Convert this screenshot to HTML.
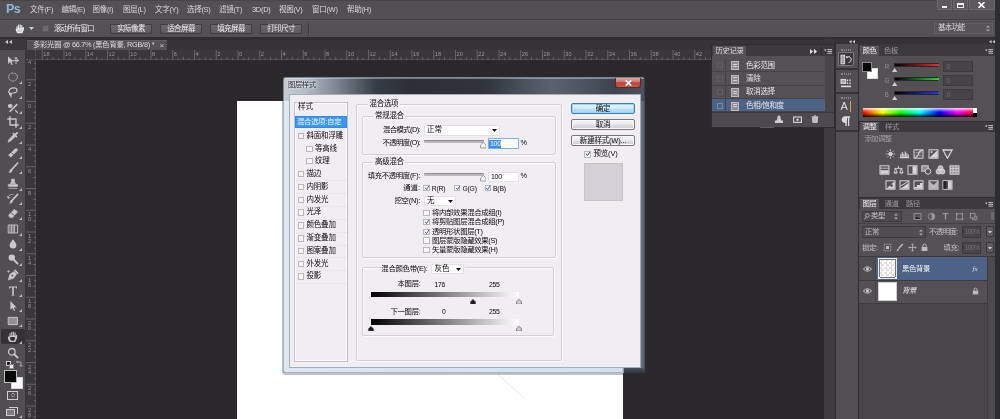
<!DOCTYPE html>
<html lang="zh-CN"><head><meta charset="utf-8"><title>图层样式</title>
<style>
html,body{margin:0;padding:0;}
body{width:1000px;height:419px;overflow:hidden;position:relative;background:#2a282b;
font-family:"Liberation Sans","Noto Sans CJK SC",sans-serif;}
div,span,svg{position:absolute;box-sizing:border-box;}
span{position:static;}
#root{left:0;top:0;width:1000px;height:419px;will-change:transform;}
</style></head><body><div id="root">
<div style="left:237px;top:101px;width:386px;height:318px;background:#ffffff;"></div>
<svg style="left:495px;top:372px" width="32" height="28"><path d="M3 2.5 L28.5 25.5" stroke="#e9e7ea" stroke-width="1" fill="none"/></svg>
<div style="left:0px;top:0px;width:1000px;height:20px;background:#525053;"></div>
<div style="left:0px;top:0px;width:1000px;height:1px;background:#474548;"></div>
<div style="left:0px;top:18.6px;width:1000px;height:1px;background:#403e41;"></div>
<div style="top:1.85px;font-size:12.5px;line-height:15.5px;color:#8db7dd;white-space:nowrap;left:6px;font-weight:bold;letter-spacing:-0.5px;">Ps</div>
<div style="top:4.85px;font-size:7.5px;line-height:10.5px;color:#dad8db;white-space:nowrap;left:30px;letter-spacing:-0.3px;">文件(F)</div>
<div style="top:4.85px;font-size:7.5px;line-height:10.5px;color:#dad8db;white-space:nowrap;left:61.5px;letter-spacing:-0.3px;">编辑(E)</div>
<div style="top:4.85px;font-size:7.5px;line-height:10.5px;color:#dad8db;white-space:nowrap;left:92.5px;letter-spacing:-0.3px;">图像(I)</div>
<div style="top:4.85px;font-size:7.5px;line-height:10.5px;color:#dad8db;white-space:nowrap;left:123px;letter-spacing:-0.3px;">图层(L)</div>
<div style="top:4.85px;font-size:7.5px;line-height:10.5px;color:#dad8db;white-space:nowrap;left:155px;letter-spacing:-0.3px;">文字(Y)</div>
<div style="top:4.85px;font-size:7.5px;line-height:10.5px;color:#dad8db;white-space:nowrap;left:187px;letter-spacing:-0.3px;">选择(S)</div>
<div style="top:4.85px;font-size:7.5px;line-height:10.5px;color:#dad8db;white-space:nowrap;left:219px;letter-spacing:-0.3px;">滤镜(T)</div>
<div style="top:4.85px;font-size:7.5px;line-height:10.5px;color:#dad8db;white-space:nowrap;left:252px;letter-spacing:-0.3px;">3D(D)</div>
<div style="top:4.85px;font-size:7.5px;line-height:10.5px;color:#dad8db;white-space:nowrap;left:279px;letter-spacing:-0.3px;">视图(V)</div>
<div style="top:4.85px;font-size:7.5px;line-height:10.5px;color:#dad8db;white-space:nowrap;left:312px;letter-spacing:-0.3px;">窗口(W)</div>
<div style="top:4.85px;font-size:7.5px;line-height:10.5px;color:#dad8db;white-space:nowrap;left:347px;letter-spacing:-0.3px;">帮助(H)</div>
<div style="left:937px;top:0px;width:15px;height:10px;background:#5b595c;border:1px solid #6a686b;border-top:none;"></div>
<div style="left:953px;top:0px;width:15px;height:10px;background:#5b595c;border:1px solid #6a686b;border-top:none;"></div>
<div style="left:969px;top:0px;width:26px;height:10px;background:#5b595c;border:1px solid #6a686b;border-top:none;"></div>
<div style="left:942px;top:6px;width:5px;height:2px;background:#f0f0f0;"></div>
<div style="left:957px;top:3px;width:7px;height:5px;border:1.5px solid #f0f0f0;border-top-width:2px;"></div>
<svg style="left:978px;top:2px" width="7" height="6" viewBox="0 0 7 6"><path d="M0.5 0 L6.5 6 M6.5 0 L0.5 6" stroke="#f4f4f4" stroke-width="1.6" fill="none"/></svg>
<div style="left:0px;top:19.6px;width:1000px;height:17.4px;background:#535154;"></div>
<div style="left:0px;top:19.6px;width:1000px;height:1px;background:#5b595c;"></div>
<div style="left:0px;top:37px;width:1000px;height:3px;background:#302e31;"></div>
<svg style="left:15px;top:24px" width="10" height="10" viewBox="0 0 10 10"><path d="M2 5 V2.2 M3.6 4.5 V1 M5.2 4.5 V0.8 M6.8 4.8 V1.6 M1.2 5.2 L2.4 8.6 H7 L8.4 5.6 V3.6 M2 4.6 Q1 6 2.6 8.6 H7 L8.2 6 V4.6 Z" stroke="#e8e8e8" stroke-width="1.1" fill="#e8e8e8" fill-opacity="0.85" stroke-linecap="round"/></svg>
<svg style="left:29px;top:27px" width="5" height="3"><path d="M0 0 H5 L2.5 3 Z" fill="#cfcfcf"/></svg>
<div style="left:42px;top:25px;width:7px;height:7px;background:#6c6a6d;border:1px solid #5a585b;"></div>
<div style="top:23.95px;font-size:7.5px;line-height:10.5px;color:#e6e4e7;white-space:nowrap;left:54px;letter-spacing:-0.9px;">滚动所有窗口</div>
<div style="left:110px;top:24px;width:42px;height:10px;background:linear-gradient(#6b696c,#5c5a5d);border:1px solid #3f3d40;border-radius:1px;"></div>
<div style="top:23.55px;font-size:7.5px;line-height:10.5px;color:#eeecef;white-space:nowrap;left:31.0px;width:200px;text-align:center;letter-spacing:-0.6px;">实际像素</div>
<div style="left:160px;top:24px;width:42px;height:10px;background:linear-gradient(#6b696c,#5c5a5d);border:1px solid #3f3d40;border-radius:1px;"></div>
<div style="top:23.55px;font-size:7.5px;line-height:10.5px;color:#eeecef;white-space:nowrap;left:81.0px;width:200px;text-align:center;letter-spacing:-0.6px;">适合屏幕</div>
<div style="left:210px;top:24px;width:42px;height:10px;background:linear-gradient(#6b696c,#5c5a5d);border:1px solid #3f3d40;border-radius:1px;"></div>
<div style="top:23.55px;font-size:7.5px;line-height:10.5px;color:#eeecef;white-space:nowrap;left:131.0px;width:200px;text-align:center;letter-spacing:-0.6px;">填充屏幕</div>
<div style="left:260px;top:24px;width:42px;height:10px;background:linear-gradient(#6b696c,#5c5a5d);border:1px solid #3f3d40;border-radius:1px;"></div>
<div style="top:23.55px;font-size:7.5px;line-height:10.5px;color:#eeecef;white-space:nowrap;left:181.0px;width:200px;text-align:center;letter-spacing:-0.6px;">打印尺寸</div>
<div style="left:308px;top:23px;width:1px;height:12px;background:#3b393c;"></div>
<div style="left:309px;top:23px;width:1px;height:12px;background:#5a585b;"></div>
<div style="left:934px;top:23px;width:59px;height:11px;background:#575558;border:1px solid #636164;"></div>
<div style="top:23.25px;font-size:7.5px;line-height:10.5px;color:#d9d7da;white-space:nowrap;left:938px;letter-spacing:-0.8px;">基本功能</div>
<svg style="left:986px;top:25px" width="4" height="7"><path d="M0 2.6 L2 0.4 L4 2.6 Z M0 4.4 L2 6.6 L4 4.4 Z" fill="#aaa"/></svg>
<div style="left:0px;top:39.5px;width:1000px;height:10px;background:#363437;"></div>
<div style="left:27px;top:40px;width:140px;height:9.5px;background:#535154;border-top:1px solid #5f5d60;"></div>
<div style="top:39.85px;font-size:7.3px;line-height:10.3px;color:#dedcdf;white-space:nowrap;left:33px;letter-spacing:-0.25px;">多彩光圈 @ 66.7% (黑色背景, RGB/8) *</div>
<div style="top:39.50px;font-size:8px;line-height:11px;color:#c9c7ca;white-space:nowrap;left:159.5px;">×</div>
<div style="left:0px;top:39px;width:25.5px;height:10.5px;background:#3a383b;"></div>
<svg style="left:5px;top:40px" width="7" height="4"><path d="M3 0 L0 2 L3 4 Z M7 0 L4 2 L7 4 Z" fill="#c8c8c8"/></svg>
<div style="left:25.5px;top:49.5px;width:809.5px;height:10px;background:#39373a;"></div>
<div style="left:25.5px;top:59.5px;width:10px;height:359.5px;background:#39373a;"></div>
<div style="left:35.5px;top:58.5px;width:799.5px;height:1px;background:#504e51;"></div>
<div style="left:34.5px;top:59.5px;width:1px;height:359.5px;background:#504e51;"></div>
<svg style="left:26px;top:49.5px;font-family:'Liberation Sans',sans-serif" width="809" height="10"><rect x="15.75" y="0" width="1" height="10" fill="#656366"/><text x="17.35" y="6.3" font-size="5.6" fill="#9a989b">18</text><rect x="37.50" y="0" width="1" height="10" fill="#656366"/><text x="39.10" y="6.3" font-size="5.6" fill="#9a989b">16</text><rect x="59.25" y="0" width="1" height="10" fill="#656366"/><text x="60.85" y="6.3" font-size="5.6" fill="#9a989b">14</text><rect x="81.00" y="0" width="1" height="10" fill="#656366"/><text x="82.60" y="6.3" font-size="5.6" fill="#9a989b">12</text><rect x="102.75" y="0" width="1" height="10" fill="#656366"/><text x="104.35" y="6.3" font-size="5.6" fill="#9a989b">10</text><rect x="124.50" y="0" width="1" height="10" fill="#656366"/><text x="126.10" y="6.3" font-size="5.6" fill="#9a989b">8</text><rect x="146.25" y="0" width="1" height="10" fill="#656366"/><text x="147.85" y="6.3" font-size="5.6" fill="#9a989b">6</text><rect x="168.00" y="0" width="1" height="10" fill="#656366"/><text x="169.60" y="6.3" font-size="5.6" fill="#9a989b">4</text><rect x="189.75" y="0" width="1" height="10" fill="#656366"/><text x="191.35" y="6.3" font-size="5.6" fill="#9a989b">2</text><rect x="211.50" y="0" width="1" height="10" fill="#656366"/><text x="213.10" y="6.3" font-size="5.6" fill="#9a989b">0</text><rect x="233.25" y="0" width="1" height="10" fill="#656366"/><text x="234.85" y="6.3" font-size="5.6" fill="#9a989b">2</text><rect x="255.00" y="0" width="1" height="10" fill="#656366"/><text x="256.60" y="6.3" font-size="5.6" fill="#9a989b">4</text><rect x="276.75" y="0" width="1" height="10" fill="#656366"/><text x="278.35" y="6.3" font-size="5.6" fill="#9a989b">6</text><rect x="298.50" y="0" width="1" height="10" fill="#656366"/><text x="300.10" y="6.3" font-size="5.6" fill="#9a989b">8</text><rect x="320.25" y="0" width="1" height="10" fill="#656366"/><text x="321.85" y="6.3" font-size="5.6" fill="#9a989b">10</text><rect x="342.00" y="0" width="1" height="10" fill="#656366"/><text x="343.60" y="6.3" font-size="5.6" fill="#9a989b">12</text><rect x="363.75" y="0" width="1" height="10" fill="#656366"/><text x="365.35" y="6.3" font-size="5.6" fill="#9a989b">14</text><rect x="385.50" y="0" width="1" height="10" fill="#656366"/><text x="387.10" y="6.3" font-size="5.6" fill="#9a989b">16</text><rect x="407.25" y="0" width="1" height="10" fill="#656366"/><text x="408.85" y="6.3" font-size="5.6" fill="#9a989b">18</text><rect x="429.00" y="0" width="1" height="10" fill="#656366"/><text x="430.60" y="6.3" font-size="5.6" fill="#9a989b">20</text><rect x="450.75" y="0" width="1" height="10" fill="#656366"/><text x="452.35" y="6.3" font-size="5.6" fill="#9a989b">22</text><rect x="472.50" y="0" width="1" height="10" fill="#656366"/><text x="474.10" y="6.3" font-size="5.6" fill="#9a989b">24</text><rect x="494.25" y="0" width="1" height="10" fill="#656366"/><text x="495.85" y="6.3" font-size="5.6" fill="#9a989b">26</text><rect x="516.00" y="0" width="1" height="10" fill="#656366"/><text x="517.60" y="6.3" font-size="5.6" fill="#9a989b">28</text><rect x="537.75" y="0" width="1" height="10" fill="#656366"/><text x="539.35" y="6.3" font-size="5.6" fill="#9a989b">30</text><rect x="559.50" y="0" width="1" height="10" fill="#656366"/><text x="561.10" y="6.3" font-size="5.6" fill="#9a989b">32</text><rect x="581.25" y="0" width="1" height="10" fill="#656366"/><text x="582.85" y="6.3" font-size="5.6" fill="#9a989b">34</text><rect x="603.00" y="0" width="1" height="10" fill="#656366"/><text x="604.60" y="6.3" font-size="5.6" fill="#9a989b">36</text><rect x="624.75" y="0" width="1" height="10" fill="#656366"/><text x="626.35" y="6.3" font-size="5.6" fill="#9a989b">38</text><rect x="646.50" y="0" width="1" height="10" fill="#656366"/><text x="648.10" y="6.3" font-size="5.6" fill="#9a989b">40</text><rect x="668.25" y="0" width="1" height="10" fill="#656366"/><text x="669.85" y="6.3" font-size="5.6" fill="#9a989b">42</text><rect x="690.00" y="0" width="1" height="10" fill="#656366"/><text x="691.60" y="6.3" font-size="5.6" fill="#9a989b">44</text><rect x="711.75" y="0" width="1" height="10" fill="#656366"/><text x="713.35" y="6.3" font-size="5.6" fill="#9a989b">46</text><rect x="733.50" y="0" width="1" height="10" fill="#656366"/><text x="735.10" y="6.3" font-size="5.6" fill="#9a989b">48</text><rect x="755.25" y="0" width="1" height="10" fill="#656366"/><text x="756.85" y="6.3" font-size="5.6" fill="#9a989b">50</text><rect x="777.00" y="0" width="1" height="10" fill="#656366"/><text x="778.60" y="6.3" font-size="5.6" fill="#9a989b">52</text><rect x="21.19" y="8" width="0.8" height="2" fill="#6f6d70"/><rect x="26.62" y="7" width="0.8" height="3" fill="#6f6d70"/><rect x="32.06" y="8" width="0.8" height="2" fill="#6f6d70"/><rect x="42.94" y="8" width="0.8" height="2" fill="#6f6d70"/><rect x="48.38" y="7" width="0.8" height="3" fill="#6f6d70"/><rect x="53.81" y="8" width="0.8" height="2" fill="#6f6d70"/><rect x="64.69" y="8" width="0.8" height="2" fill="#6f6d70"/><rect x="70.12" y="7" width="0.8" height="3" fill="#6f6d70"/><rect x="75.56" y="8" width="0.8" height="2" fill="#6f6d70"/><rect x="86.44" y="8" width="0.8" height="2" fill="#6f6d70"/><rect x="91.88" y="7" width="0.8" height="3" fill="#6f6d70"/><rect x="97.31" y="8" width="0.8" height="2" fill="#6f6d70"/><rect x="108.19" y="8" width="0.8" height="2" fill="#6f6d70"/><rect x="113.62" y="7" width="0.8" height="3" fill="#6f6d70"/><rect x="119.06" y="8" width="0.8" height="2" fill="#6f6d70"/><rect x="129.94" y="8" width="0.8" height="2" fill="#6f6d70"/><rect x="135.38" y="7" width="0.8" height="3" fill="#6f6d70"/><rect x="140.81" y="8" width="0.8" height="2" fill="#6f6d70"/><rect x="151.69" y="8" width="0.8" height="2" fill="#6f6d70"/><rect x="157.12" y="7" width="0.8" height="3" fill="#6f6d70"/><rect x="162.56" y="8" width="0.8" height="2" fill="#6f6d70"/><rect x="173.44" y="8" width="0.8" height="2" fill="#6f6d70"/><rect x="178.88" y="7" width="0.8" height="3" fill="#6f6d70"/><rect x="184.31" y="8" width="0.8" height="2" fill="#6f6d70"/><rect x="195.19" y="8" width="0.8" height="2" fill="#6f6d70"/><rect x="200.62" y="7" width="0.8" height="3" fill="#6f6d70"/><rect x="206.06" y="8" width="0.8" height="2" fill="#6f6d70"/><rect x="216.94" y="8" width="0.8" height="2" fill="#6f6d70"/><rect x="222.38" y="7" width="0.8" height="3" fill="#6f6d70"/><rect x="227.81" y="8" width="0.8" height="2" fill="#6f6d70"/><rect x="238.69" y="8" width="0.8" height="2" fill="#6f6d70"/><rect x="244.12" y="7" width="0.8" height="3" fill="#6f6d70"/><rect x="249.56" y="8" width="0.8" height="2" fill="#6f6d70"/><rect x="260.44" y="8" width="0.8" height="2" fill="#6f6d70"/><rect x="265.88" y="7" width="0.8" height="3" fill="#6f6d70"/><rect x="271.31" y="8" width="0.8" height="2" fill="#6f6d70"/><rect x="282.19" y="8" width="0.8" height="2" fill="#6f6d70"/><rect x="287.62" y="7" width="0.8" height="3" fill="#6f6d70"/><rect x="293.06" y="8" width="0.8" height="2" fill="#6f6d70"/><rect x="303.94" y="8" width="0.8" height="2" fill="#6f6d70"/><rect x="309.38" y="7" width="0.8" height="3" fill="#6f6d70"/><rect x="314.81" y="8" width="0.8" height="2" fill="#6f6d70"/><rect x="325.69" y="8" width="0.8" height="2" fill="#6f6d70"/><rect x="331.12" y="7" width="0.8" height="3" fill="#6f6d70"/><rect x="336.56" y="8" width="0.8" height="2" fill="#6f6d70"/><rect x="347.44" y="8" width="0.8" height="2" fill="#6f6d70"/><rect x="352.88" y="7" width="0.8" height="3" fill="#6f6d70"/><rect x="358.31" y="8" width="0.8" height="2" fill="#6f6d70"/><rect x="369.19" y="8" width="0.8" height="2" fill="#6f6d70"/><rect x="374.62" y="7" width="0.8" height="3" fill="#6f6d70"/><rect x="380.06" y="8" width="0.8" height="2" fill="#6f6d70"/><rect x="390.94" y="8" width="0.8" height="2" fill="#6f6d70"/><rect x="396.38" y="7" width="0.8" height="3" fill="#6f6d70"/><rect x="401.81" y="8" width="0.8" height="2" fill="#6f6d70"/><rect x="412.69" y="8" width="0.8" height="2" fill="#6f6d70"/><rect x="418.12" y="7" width="0.8" height="3" fill="#6f6d70"/><rect x="423.56" y="8" width="0.8" height="2" fill="#6f6d70"/><rect x="434.44" y="8" width="0.8" height="2" fill="#6f6d70"/><rect x="439.88" y="7" width="0.8" height="3" fill="#6f6d70"/><rect x="445.31" y="8" width="0.8" height="2" fill="#6f6d70"/><rect x="456.19" y="8" width="0.8" height="2" fill="#6f6d70"/><rect x="461.62" y="7" width="0.8" height="3" fill="#6f6d70"/><rect x="467.06" y="8" width="0.8" height="2" fill="#6f6d70"/><rect x="477.94" y="8" width="0.8" height="2" fill="#6f6d70"/><rect x="483.38" y="7" width="0.8" height="3" fill="#6f6d70"/><rect x="488.81" y="8" width="0.8" height="2" fill="#6f6d70"/><rect x="499.69" y="8" width="0.8" height="2" fill="#6f6d70"/><rect x="505.12" y="7" width="0.8" height="3" fill="#6f6d70"/><rect x="510.56" y="8" width="0.8" height="2" fill="#6f6d70"/><rect x="521.44" y="8" width="0.8" height="2" fill="#6f6d70"/><rect x="526.88" y="7" width="0.8" height="3" fill="#6f6d70"/><rect x="532.31" y="8" width="0.8" height="2" fill="#6f6d70"/><rect x="543.19" y="8" width="0.8" height="2" fill="#6f6d70"/><rect x="548.62" y="7" width="0.8" height="3" fill="#6f6d70"/><rect x="554.06" y="8" width="0.8" height="2" fill="#6f6d70"/><rect x="564.94" y="8" width="0.8" height="2" fill="#6f6d70"/><rect x="570.38" y="7" width="0.8" height="3" fill="#6f6d70"/><rect x="575.81" y="8" width="0.8" height="2" fill="#6f6d70"/><rect x="586.69" y="8" width="0.8" height="2" fill="#6f6d70"/><rect x="592.12" y="7" width="0.8" height="3" fill="#6f6d70"/><rect x="597.56" y="8" width="0.8" height="2" fill="#6f6d70"/><rect x="608.44" y="8" width="0.8" height="2" fill="#6f6d70"/><rect x="613.88" y="7" width="0.8" height="3" fill="#6f6d70"/><rect x="619.31" y="8" width="0.8" height="2" fill="#6f6d70"/><rect x="630.19" y="8" width="0.8" height="2" fill="#6f6d70"/><rect x="635.62" y="7" width="0.8" height="3" fill="#6f6d70"/><rect x="641.06" y="8" width="0.8" height="2" fill="#6f6d70"/><rect x="651.94" y="8" width="0.8" height="2" fill="#6f6d70"/><rect x="657.38" y="7" width="0.8" height="3" fill="#6f6d70"/><rect x="662.81" y="8" width="0.8" height="2" fill="#6f6d70"/><rect x="673.69" y="8" width="0.8" height="2" fill="#6f6d70"/><rect x="679.12" y="7" width="0.8" height="3" fill="#6f6d70"/><rect x="684.56" y="8" width="0.8" height="2" fill="#6f6d70"/><rect x="695.44" y="8" width="0.8" height="2" fill="#6f6d70"/><rect x="700.88" y="7" width="0.8" height="3" fill="#6f6d70"/><rect x="706.31" y="8" width="0.8" height="2" fill="#6f6d70"/><rect x="717.19" y="8" width="0.8" height="2" fill="#6f6d70"/><rect x="722.62" y="7" width="0.8" height="3" fill="#6f6d70"/><rect x="728.06" y="8" width="0.8" height="2" fill="#6f6d70"/><rect x="738.94" y="8" width="0.8" height="2" fill="#6f6d70"/><rect x="744.38" y="7" width="0.8" height="3" fill="#6f6d70"/><rect x="749.81" y="8" width="0.8" height="2" fill="#6f6d70"/><rect x="760.69" y="8" width="0.8" height="2" fill="#6f6d70"/><rect x="766.12" y="7" width="0.8" height="3" fill="#6f6d70"/><rect x="771.56" y="8" width="0.8" height="2" fill="#6f6d70"/><rect x="782.44" y="8" width="0.8" height="2" fill="#6f6d70"/><rect x="787.88" y="7" width="0.8" height="3" fill="#6f6d70"/><rect x="793.31" y="8" width="0.8" height="2" fill="#6f6d70"/></svg>
<svg style="left:25.5px;top:60px;font-family:'Liberation Sans',sans-serif" width="10" height="359"><rect x="0" y="-2.50" width="10" height="1" fill="#656366"/><text x="2" y="4.00" font-size="5.6" fill="#9a989b">4</text><rect x="0" y="19.25" width="10" height="1" fill="#656366"/><text x="2" y="25.75" font-size="5.6" fill="#9a989b">2</text><rect x="0" y="41.00" width="10" height="1" fill="#656366"/><text x="2" y="47.50" font-size="5.6" fill="#9a989b">0</text><rect x="0" y="62.75" width="10" height="1" fill="#656366"/><text x="2" y="69.25" font-size="5.6" fill="#9a989b">2</text><rect x="0" y="84.50" width="10" height="1" fill="#656366"/><text x="2" y="91.00" font-size="5.6" fill="#9a989b">4</text><rect x="0" y="106.25" width="10" height="1" fill="#656366"/><text x="2" y="112.75" font-size="5.6" fill="#9a989b">6</text><rect x="0" y="128.00" width="10" height="1" fill="#656366"/><text x="2" y="134.50" font-size="5.6" fill="#9a989b">8</text><rect x="0" y="149.75" width="10" height="1" fill="#656366"/><text x="2" y="156.25" font-size="5.6" fill="#9a989b">1</text><text x="2" y="161.25" font-size="5.6" fill="#9a989b">0</text><rect x="0" y="171.50" width="10" height="1" fill="#656366"/><text x="2" y="178.00" font-size="5.6" fill="#9a989b">1</text><text x="2" y="183.00" font-size="5.6" fill="#9a989b">2</text><rect x="0" y="193.25" width="10" height="1" fill="#656366"/><text x="2" y="199.75" font-size="5.6" fill="#9a989b">1</text><text x="2" y="204.75" font-size="5.6" fill="#9a989b">4</text><rect x="0" y="215.00" width="10" height="1" fill="#656366"/><text x="2" y="221.50" font-size="5.6" fill="#9a989b">1</text><text x="2" y="226.50" font-size="5.6" fill="#9a989b">6</text><rect x="0" y="236.75" width="10" height="1" fill="#656366"/><text x="2" y="243.25" font-size="5.6" fill="#9a989b">1</text><text x="2" y="248.25" font-size="5.6" fill="#9a989b">8</text><rect x="0" y="258.50" width="10" height="1" fill="#656366"/><text x="2" y="265.00" font-size="5.6" fill="#9a989b">2</text><text x="2" y="270.00" font-size="5.6" fill="#9a989b">0</text><rect x="0" y="280.25" width="10" height="1" fill="#656366"/><text x="2" y="286.75" font-size="5.6" fill="#9a989b">2</text><text x="2" y="291.75" font-size="5.6" fill="#9a989b">2</text><rect x="0" y="302.00" width="10" height="1" fill="#656366"/><text x="2" y="308.50" font-size="5.6" fill="#9a989b">2</text><text x="2" y="313.50" font-size="5.6" fill="#9a989b">4</text><rect x="0" y="323.75" width="10" height="1" fill="#656366"/><text x="2" y="330.25" font-size="5.6" fill="#9a989b">2</text><text x="2" y="335.25" font-size="5.6" fill="#9a989b">6</text><rect x="0" y="345.50" width="10" height="1" fill="#656366"/><text x="2" y="352.00" font-size="5.6" fill="#9a989b">2</text><text x="2" y="357.00" font-size="5.6" fill="#9a989b">8</text><rect x="8" y="2.94" width="2" height="0.8" fill="#6f6d70"/><rect x="7" y="8.38" width="3" height="0.8" fill="#6f6d70"/><rect x="8" y="13.81" width="2" height="0.8" fill="#6f6d70"/><rect x="8" y="24.69" width="2" height="0.8" fill="#6f6d70"/><rect x="7" y="30.12" width="3" height="0.8" fill="#6f6d70"/><rect x="8" y="35.56" width="2" height="0.8" fill="#6f6d70"/><rect x="8" y="46.44" width="2" height="0.8" fill="#6f6d70"/><rect x="7" y="51.88" width="3" height="0.8" fill="#6f6d70"/><rect x="8" y="57.31" width="2" height="0.8" fill="#6f6d70"/><rect x="8" y="68.19" width="2" height="0.8" fill="#6f6d70"/><rect x="7" y="73.62" width="3" height="0.8" fill="#6f6d70"/><rect x="8" y="79.06" width="2" height="0.8" fill="#6f6d70"/><rect x="8" y="89.94" width="2" height="0.8" fill="#6f6d70"/><rect x="7" y="95.38" width="3" height="0.8" fill="#6f6d70"/><rect x="8" y="100.81" width="2" height="0.8" fill="#6f6d70"/><rect x="8" y="111.69" width="2" height="0.8" fill="#6f6d70"/><rect x="7" y="117.12" width="3" height="0.8" fill="#6f6d70"/><rect x="8" y="122.56" width="2" height="0.8" fill="#6f6d70"/><rect x="8" y="133.44" width="2" height="0.8" fill="#6f6d70"/><rect x="7" y="138.88" width="3" height="0.8" fill="#6f6d70"/><rect x="8" y="144.31" width="2" height="0.8" fill="#6f6d70"/><rect x="8" y="155.19" width="2" height="0.8" fill="#6f6d70"/><rect x="7" y="160.62" width="3" height="0.8" fill="#6f6d70"/><rect x="8" y="166.06" width="2" height="0.8" fill="#6f6d70"/><rect x="8" y="176.94" width="2" height="0.8" fill="#6f6d70"/><rect x="7" y="182.38" width="3" height="0.8" fill="#6f6d70"/><rect x="8" y="187.81" width="2" height="0.8" fill="#6f6d70"/><rect x="8" y="198.69" width="2" height="0.8" fill="#6f6d70"/><rect x="7" y="204.12" width="3" height="0.8" fill="#6f6d70"/><rect x="8" y="209.56" width="2" height="0.8" fill="#6f6d70"/><rect x="8" y="220.44" width="2" height="0.8" fill="#6f6d70"/><rect x="7" y="225.88" width="3" height="0.8" fill="#6f6d70"/><rect x="8" y="231.31" width="2" height="0.8" fill="#6f6d70"/><rect x="8" y="242.19" width="2" height="0.8" fill="#6f6d70"/><rect x="7" y="247.62" width="3" height="0.8" fill="#6f6d70"/><rect x="8" y="253.06" width="2" height="0.8" fill="#6f6d70"/><rect x="8" y="263.94" width="2" height="0.8" fill="#6f6d70"/><rect x="7" y="269.38" width="3" height="0.8" fill="#6f6d70"/><rect x="8" y="274.81" width="2" height="0.8" fill="#6f6d70"/><rect x="8" y="285.69" width="2" height="0.8" fill="#6f6d70"/><rect x="7" y="291.12" width="3" height="0.8" fill="#6f6d70"/><rect x="8" y="296.56" width="2" height="0.8" fill="#6f6d70"/><rect x="8" y="307.44" width="2" height="0.8" fill="#6f6d70"/><rect x="7" y="312.88" width="3" height="0.8" fill="#6f6d70"/><rect x="8" y="318.31" width="2" height="0.8" fill="#6f6d70"/><rect x="8" y="329.19" width="2" height="0.8" fill="#6f6d70"/><rect x="7" y="334.62" width="3" height="0.8" fill="#6f6d70"/><rect x="8" y="340.06" width="2" height="0.8" fill="#6f6d70"/><rect x="8" y="350.94" width="2" height="0.8" fill="#6f6d70"/><rect x="7" y="356.38" width="3" height="0.8" fill="#6f6d70"/></svg>
<div style="left:25.5px;top:49.5px;width:10px;height:10px;background:#39373a;border-right:1px dotted #5f5d60;border-bottom:1px dotted #5f5d60;"></div>
<div style="left:0px;top:49.5px;width:24.5px;height:369.5px;background:#504e51;"></div>
<div style="left:24.5px;top:49.5px;width:1px;height:369.5px;background:#39373a;"></div>
<div style="left:1px;top:329px;width:24px;height:15px;background:#343235;border-radius:2px;"></div>
<svg style="left:6.5px;top:54.5px" width="12" height="12" viewBox="0 0 12 12" fill="none" stroke="#c9c7ca" stroke-width="1.2" stroke-linecap="round" stroke-linejoin="round"><path d="M1 1.5 L1 9 L3 7 L4.5 10 L5.7 9.4 L4.3 6.6 L7 6.6 Z" fill="#c9c7ca" stroke="none"/><path d="M9 2.5 V8.5 M6.5 5.5 H11.5 M9 2.5 l-1 1 M9 2.5 l1 1 M11.5 5.5 l-1 -1 M11.5 5.5 l-1 1" stroke-width="0.9"/></svg>
<svg style="left:6.5px;top:71.0px" width="12" height="12" viewBox="0 0 12 12" fill="none" stroke="#c9c7ca" stroke-width="1.2" stroke-linecap="round" stroke-linejoin="round"><ellipse cx="6" cy="6" rx="4.4" ry="4" stroke-dasharray="1.5 1.4" stroke-width="1" stroke-opacity="0.8"/></svg>
<svg style="left:18.5px;top:80.5px" width="3" height="3"><path d="M3 0 V3 H0 Z" fill="#bdbbbe"/></svg>
<svg style="left:6.5px;top:86.0px" width="12" height="12" viewBox="0 0 12 12" fill="none" stroke="#c9c7ca" stroke-width="1.2" stroke-linecap="round" stroke-linejoin="round"><path d="M2.5 7.5 C0.5 5 3 1.5 7 1.8 C11 2.2 11 6 7.5 6.8 C5.5 7.2 4 6.8 3.6 8 C3.4 9 4.4 9.4 4 11" /><circle cx="3.4" cy="8" r="0.9" fill="#c9c7ca"/></svg>
<svg style="left:18.5px;top:95.5px" width="3" height="3"><path d="M3 0 V3 H0 Z" fill="#bdbbbe"/></svg>
<svg style="left:6.5px;top:101.5px" width="12" height="12" viewBox="0 0 12 12" fill="none" stroke="#c9c7ca" stroke-width="1.2" stroke-linecap="round" stroke-linejoin="round"><path d="M3 9.5 L9.8 2.6" stroke-width="1.6"/><ellipse cx="3.2" cy="4" rx="2.4" ry="2" fill="#c9c7ca" stroke="none"/><path d="M8.5 8.5 l2 2" /></svg>
<svg style="left:18.5px;top:111.0px" width="3" height="3"><path d="M3 0 V3 H0 Z" fill="#bdbbbe"/></svg>
<svg style="left:6.5px;top:116.0px" width="12" height="12" viewBox="0 0 12 12" fill="none" stroke="#c9c7ca" stroke-width="1.2" stroke-linecap="round" stroke-linejoin="round"><path d="M3 0.8 V9 H11.2 M0.8 3 H9 V11.2" stroke-width="1.4"/></svg>
<svg style="left:18.5px;top:125.5px" width="3" height="3"><path d="M3 0 V3 H0 Z" fill="#bdbbbe"/></svg>
<svg style="left:6.5px;top:131.0px" width="12" height="12" viewBox="0 0 12 12" fill="none" stroke="#c9c7ca" stroke-width="1.2" stroke-linecap="round" stroke-linejoin="round"><path d="M1.2 10.8 L2 8.4 L6.6 3.8 L8.2 5.4 L3.6 10 Z" fill="#c9c7ca" stroke-width="0.8"/><path d="M6.4 2.6 L9.4 5.6 M7.8 4.2 L10 2 " stroke-width="1.8"/></svg>
<svg style="left:18.5px;top:140.5px" width="3" height="3"><path d="M3 0 V3 H0 Z" fill="#bdbbbe"/></svg>
<svg style="left:6.5px;top:146.5px" width="12" height="12" viewBox="0 0 12 12" fill="none" stroke="#c9c7ca" stroke-width="1.2" stroke-linecap="round" stroke-linejoin="round"><path d="M2 8 L8 2 Q10 1 10.6 3 L4.6 9.4 Q2.6 10.6 2 8 Z" fill="#c9c7ca" stroke-width="0.8"/><path d="M4.4 5.6 L6.8 8" stroke="#504e51" stroke-width="0.8"/></svg>
<svg style="left:18.5px;top:156.0px" width="3" height="3"><path d="M3 0 V3 H0 Z" fill="#bdbbbe"/></svg>
<svg style="left:6.5px;top:161.5px" width="12" height="12" viewBox="0 0 12 12" fill="none" stroke="#c9c7ca" stroke-width="1.2" stroke-linecap="round" stroke-linejoin="round"><path d="M10.5 1.2 L5 7.2" stroke-width="1.7"/><path d="M4.6 7 Q2.4 7.2 2.6 9 Q2.4 10.2 1.2 10.8 Q4.4 11.2 5.4 9 Q5.8 7.8 4.6 7 Z" fill="#c9c7ca" stroke="none"/></svg>
<svg style="left:18.5px;top:171.0px" width="3" height="3"><path d="M3 0 V3 H0 Z" fill="#bdbbbe"/></svg>
<svg style="left:6.5px;top:178.0px" width="12" height="12" viewBox="0 0 12 12" fill="none" stroke="#c9c7ca" stroke-width="1.2" stroke-linecap="round" stroke-linejoin="round"><path d="M4.6 1.2 H7.4 V4 L8.6 5.6 H3.4 L4.6 4 Z M1.6 6.4 H10.4 V8.4 H1.6 Z M2 10.4 H10" fill="#c9c7ca" stroke-width="0.7"/></svg>
<svg style="left:18.5px;top:187.5px" width="3" height="3"><path d="M3 0 V3 H0 Z" fill="#bdbbbe"/></svg>
<svg style="left:6.5px;top:192.5px" width="12" height="12" viewBox="0 0 12 12" fill="none" stroke="#c9c7ca" stroke-width="1.2" stroke-linecap="round" stroke-linejoin="round"><path d="M10.6 1.4 L5.8 6.6" stroke-width="1.6"/><path d="M5.2 6.6 Q3.2 6.8 3.4 8.6 Q3.2 9.8 2 10.4 Q5 10.8 6 8.6 Q6.4 7.4 5.2 6.6 Z" fill="#c9c7ca" stroke="none"/><path d="M1.2 5 A3.4 3.4 0 0 1 6 1.6 M1.2 5 l-0.6 -1.6 M1.2 5 l1.7 -0.5" stroke-width="0.8"/></svg>
<svg style="left:18.5px;top:202.0px" width="3" height="3"><path d="M3 0 V3 H0 Z" fill="#bdbbbe"/></svg>
<svg style="left:6.5px;top:207.0px" width="12" height="12" viewBox="0 0 12 12" fill="none" stroke="#c9c7ca" stroke-width="1.2" stroke-linecap="round" stroke-linejoin="round"><path d="M1.6 8.2 L7.2 2.4 L10.6 4.8 L5.6 10.4 H3.2 Z" fill="#c9c7ca" stroke-width="0.7"/><path d="M3.8 5.8 L7.4 8.4" stroke="#504e51" stroke-width="0.8"/></svg>
<svg style="left:18.5px;top:216.5px" width="3" height="3"><path d="M3 0 V3 H0 Z" fill="#bdbbbe"/></svg>
<svg style="left:6.5px;top:223.0px" width="12" height="12" viewBox="0 0 12 12" fill="none" stroke="#c9c7ca" stroke-width="1.2" stroke-linecap="round" stroke-linejoin="round"><rect x="1.6" y="2" width="9" height="8" fill="none" stroke-width="0.9"/><path d="M3 2.4 V9.6 M4.6 2.4 V9.6 M6.2 2.4 V9.6 M7.6 2.4 V9.6" stroke-width="0.9"/></svg>
<svg style="left:18.5px;top:232.5px" width="3" height="3"><path d="M3 0 V3 H0 Z" fill="#bdbbbe"/></svg>
<svg style="left:6.5px;top:238.0px" width="12" height="12" viewBox="0 0 12 12" fill="none" stroke="#c9c7ca" stroke-width="1.2" stroke-linecap="round" stroke-linejoin="round"><path d="M6 1.2 Q9.6 5.6 9.4 7.6 Q9.2 10.6 6 10.6 Q2.8 10.6 2.6 7.6 Q2.4 5.6 6 1.2 Z" fill="#c9c7ca" stroke="none"/></svg>
<svg style="left:18.5px;top:247.5px" width="3" height="3"><path d="M3 0 V3 H0 Z" fill="#bdbbbe"/></svg>
<svg style="left:6.5px;top:253.0px" width="12" height="12" viewBox="0 0 12 12" fill="none" stroke="#c9c7ca" stroke-width="1.2" stroke-linecap="round" stroke-linejoin="round"><circle cx="4.8" cy="4.6" r="3.2" fill="#c9c7ca" stroke="none"/><path d="M7 7 L10.6 10.6" stroke-width="1.8"/></svg>
<svg style="left:18.5px;top:262.5px" width="3" height="3"><path d="M3 0 V3 H0 Z" fill="#bdbbbe"/></svg>
<svg style="left:6.5px;top:269.0px" width="12" height="12" viewBox="0 0 12 12" fill="none" stroke="#c9c7ca" stroke-width="1.2" stroke-linecap="round" stroke-linejoin="round"><path d="M1.4 10.6 L3 5.2 L7.2 2.6 L9.6 5 L6.8 9 Z" fill="#c9c7ca" stroke-width="0.7"/><path d="M8 1.4 L10.8 4.2" stroke-width="1.5"/><circle cx="5.4" cy="6.6" r="0.9" fill="#504e51" stroke="none"/><path d="M0.6 2.4 l2 0 M1.6 1.4 v2" stroke-width="0.7"/></svg>
<svg style="left:18.5px;top:278.5px" width="3" height="3"><path d="M3 0 V3 H0 Z" fill="#bdbbbe"/></svg>
<svg style="left:6.5px;top:284.5px" width="12" height="12" viewBox="0 0 12 12" fill="none" stroke="#c9c7ca" stroke-width="1.2" stroke-linecap="round" stroke-linejoin="round"><path d="M2 1.6 H10 V3.6 H9.2 L8.8 2.6 H6.8 V9.8 L8 10.4 H4 L5.2 9.8 V2.6 H3.2 L2.8 3.6 H2 Z" fill="#c9c7ca" stroke="none"/></svg>
<svg style="left:18.5px;top:294.0px" width="3" height="3"><path d="M3 0 V3 H0 Z" fill="#bdbbbe"/></svg>
<svg style="left:6.5px;top:299.5px" width="12" height="12" viewBox="0 0 12 12" fill="none" stroke="#c9c7ca" stroke-width="1.2" stroke-linecap="round" stroke-linejoin="round"><path d="M3.4 1 V10 L5.4 7.8 L7 11 L8.2 10.4 L6.8 7.4 H9.6 Z" fill="#c9c7ca" stroke="none"/></svg>
<svg style="left:18.5px;top:309.0px" width="3" height="3"><path d="M3 0 V3 H0 Z" fill="#bdbbbe"/></svg>
<svg style="left:6.5px;top:314.5px" width="12" height="12" viewBox="0 0 12 12" fill="none" stroke="#c9c7ca" stroke-width="1.2" stroke-linecap="round" stroke-linejoin="round"><rect x="1.6" y="2.4" width="8.8" height="7.2" fill="#c9c7ca" fill-opacity="0.55" stroke-width="1"/></svg>
<svg style="left:18.5px;top:324.0px" width="3" height="3"><path d="M3 0 V3 H0 Z" fill="#bdbbbe"/></svg>
<svg style="left:6.5px;top:331.0px" width="12" height="12" viewBox="0 0 12 12" fill="none" stroke="#c9c7ca" stroke-width="1.2" stroke-linecap="round" stroke-linejoin="round"><path d="M3 6 V2.6 M4.7 5.4 V1.2 M6.4 5.4 V1 M8.1 5.8 V1.8 M1.6 6 Q0.8 7 3 10.4 H8 L9.6 6.8 V4.2 M3 5.4 H8.6 V8 L7.6 10.2 H3.4 L2.2 7 Z" fill="#c9c7ca" fill-opacity="0.9" stroke-width="1.1"/></svg>
<svg style="left:18.5px;top:340.5px" width="3" height="3"><path d="M3 0 V3 H0 Z" fill="#bdbbbe"/></svg>
<svg style="left:6.5px;top:347.0px" width="12" height="12" viewBox="0 0 12 12" fill="none" stroke="#c9c7ca" stroke-width="1.2" stroke-linecap="round" stroke-linejoin="round"><circle cx="4.8" cy="4.8" r="3.3" stroke-width="1.3"/><path d="M7.4 7.4 L10.6 10.6" stroke-width="1.9"/></svg>
<div style="left:6px;top:361px;width:5px;height:5px;background:#1a1a1a;border:1px solid #cfcfcf;"></div>
<div style="left:8.5px;top:363.5px;width:5px;height:5px;background:#efefef;border:1px solid #8a8a8a;"></div>
<svg style="left:15px;top:360px" width="8" height="8" viewBox="0 0 8 8"><path d="M1.5 2 H5 Q6 2 6 3 V6.5 M1.5 2 l1.3 -1.3 M1.5 2 l1.3 1.3 M6 6.5 l-1.3 -1.3 M6 6.5 l1.3 -1.3" stroke="#c8c8c8" stroke-width="0.8" fill="none"/></svg>
<div style="left:11px;top:377px;width:12px;height:12px;background:#ffffff;border:1px solid #d8d8d8;"></div>
<div style="left:4px;top:370px;width:13px;height:13px;background:#0a0a0a;border:1px solid #bdbdbd;"></div>
<div style="left:7px;top:390.5px;width:11px;height:9px;border:1px solid #cfcdd0;"></div>
<div style="left:10.5px;top:393px;width:4px;height:4px;border:1px dotted #cfcdd0;border-radius:2px;"></div>
<div style="left:6px;top:409px;width:9px;height:7px;background:#7d7b7e;border:1px solid #cfcdd0;"></div>
<div style="left:9px;top:406.5px;width:9px;height:7px;border:1px solid #cfcdd0;border-left:none;border-bottom:none;"></div>
<svg style="left:18.5px;top:414.5px" width="3" height="3"><path d="M3 0 V3 H0 Z" fill="#bdbbbe"/></svg>
<div style="left:282px;top:76px;width:365px;height:299px;background:rgba(40,50,70,0.30);border-radius:4px;"></div>
<div style="left:283px;top:77px;width:362px;height:296px;border-radius:3px;border:1px solid #7d858f;border-right-color:#3a4049;background:linear-gradient(90deg,#c6ccd4 0px,#b4bcc6 22px,#78818c 55px,#363c45 92px,#2b3038 125px,#2e333c 200px,#4a525d 240px,#5a626e 268px,#4c545f 300px,#3d444e 330px,#4c545f 362px);"></div>
<div style="left:283px;top:101px;width:362px;height:272px;border-radius:0 0 3px 3px;border:1px solid #a3b4c8;border-top:none;border-right-color:#454c56;background:linear-gradient(90deg,#dfe8f2 0px,#d3e0ee 338px,#505a68 341px,#69737f 357px,#56606d 361px,#3a4049 362px);"></div>
<div style="left:284px;top:78px;width:360px;height:1px;background:rgba(255,255,255,0.35);"></div>
<div style="top:80.40px;font-size:7.4px;line-height:10.4px;color:#1c2028;white-space:nowrap;left:288px;letter-spacing:-0.5px;text-shadow:0 0 3px rgba(255,255,255,0.9),0 0 2px rgba(255,255,255,0.8);">图层样式</div>
<div style="left:615px;top:78px;width:26px;height:10px;background:linear-gradient(#dca79f 0%,#cf7467 45%,#bd4232 52%,#c9594a 100%);border:1px solid #5b2a25;border-top:none;border-radius:0 0 3px 3px;"></div>
<svg style="left:624.5px;top:80px" width="7" height="6" viewBox="0 0 7 6"><path d="M0.8 0.4 L6.2 5.6 M6.2 0.4 L0.8 5.6" stroke="#ffffff" stroke-width="1.7" fill="none"/></svg>
<div style="left:624px;top:367.5px;width:20.5px;height:5px;background:linear-gradient(180deg,#4a5260,#2f343d);"></div>
<div style="left:288.5px;top:94px;width:352.5px;height:273.5px;background:#f0eef1;border:1px solid #a4adb9;"></div>
<div style="left:294px;top:101.5px;width:54px;height:260px;background:#f0eef1;border:1px solid #c2c0c4;"></div>
<div style="left:295px;top:102.5px;width:52px;height:258px;border:1px solid #fbfafc;"></div>
<div style="top:102.00px;font-size:7.6px;line-height:10.6px;color:#0a080b;white-space:nowrap;left:298px;">样式</div>
<div style="left:295px;top:116px;width:52px;height:11.6px;background:#3a97f5;border:1px solid #3389e4;"></div>
<div style="top:116.60px;font-size:7.4px;line-height:10.4px;color:#f4f8ff;white-space:nowrap;left:297px;letter-spacing:-0.3px;">混合选项:自定</div>
<div style="left:297.5px;top:132.5px;width:6.6px;height:6.6px;background:#f8f8fa;border:1px solid #b9b7bc;"></div>
<div style="top:130.55px;font-size:7.5px;line-height:10.5px;color:#0a080b;white-space:nowrap;left:306.5px;letter-spacing:-0.2px;">斜面和浮雕</div>
<div style="left:306.0px;top:145.5px;width:6.6px;height:6.6px;background:#f8f8fa;border:1px solid #b9b7bc;"></div>
<div style="top:143.55px;font-size:7.5px;line-height:10.5px;color:#0a080b;white-space:nowrap;left:315.0px;letter-spacing:-0.2px;">等高线</div>
<div style="left:306.0px;top:157.7px;width:6.6px;height:6.6px;background:#f8f8fa;border:1px solid #b9b7bc;"></div>
<div style="top:155.75px;font-size:7.5px;line-height:10.5px;color:#0a080b;white-space:nowrap;left:315.0px;letter-spacing:-0.2px;">纹理</div>
<div style="left:297.5px;top:170.7px;width:6.6px;height:6.6px;background:#f8f8fa;border:1px solid #b9b7bc;"></div>
<div style="top:168.75px;font-size:7.5px;line-height:10.5px;color:#0a080b;white-space:nowrap;left:306.5px;letter-spacing:-0.2px;">描边</div>
<div style="left:295.5px;top:180.2px;width:51px;height:1px;background:#e8e6ea;"></div>
<div style="left:297.5px;top:183.7px;width:6.6px;height:6.6px;background:#f8f8fa;border:1px solid #b9b7bc;"></div>
<div style="top:181.75px;font-size:7.5px;line-height:10.5px;color:#0a080b;white-space:nowrap;left:306.5px;letter-spacing:-0.2px;">内阴影</div>
<div style="left:295.5px;top:193.2px;width:51px;height:1px;background:#e8e6ea;"></div>
<div style="left:297.5px;top:196.7px;width:6.6px;height:6.6px;background:#f8f8fa;border:1px solid #b9b7bc;"></div>
<div style="top:194.75px;font-size:7.5px;line-height:10.5px;color:#0a080b;white-space:nowrap;left:306.5px;letter-spacing:-0.2px;">内发光</div>
<div style="left:295.5px;top:206.2px;width:51px;height:1px;background:#e8e6ea;"></div>
<div style="left:297.5px;top:209.39999999999998px;width:6.6px;height:6.6px;background:#f8f8fa;border:1px solid #b9b7bc;"></div>
<div style="top:207.45px;font-size:7.5px;line-height:10.5px;color:#0a080b;white-space:nowrap;left:306.5px;letter-spacing:-0.2px;">光泽</div>
<div style="left:295.5px;top:218.89999999999998px;width:51px;height:1px;background:#e8e6ea;"></div>
<div style="left:297.5px;top:222.2px;width:6.6px;height:6.6px;background:#f8f8fa;border:1px solid #b9b7bc;"></div>
<div style="top:220.25px;font-size:7.5px;line-height:10.5px;color:#0a080b;white-space:nowrap;left:306.5px;letter-spacing:-0.2px;">颜色叠加</div>
<div style="left:295.5px;top:231.7px;width:51px;height:1px;background:#e8e6ea;"></div>
<div style="left:297.5px;top:235.0px;width:6.6px;height:6.6px;background:#f8f8fa;border:1px solid #b9b7bc;"></div>
<div style="top:233.05px;font-size:7.5px;line-height:10.5px;color:#0a080b;white-space:nowrap;left:306.5px;letter-spacing:-0.2px;">渐变叠加</div>
<div style="left:295.5px;top:244.5px;width:51px;height:1px;background:#e8e6ea;"></div>
<div style="left:297.5px;top:247.7px;width:6.6px;height:6.6px;background:#f8f8fa;border:1px solid #b9b7bc;"></div>
<div style="top:245.75px;font-size:7.5px;line-height:10.5px;color:#0a080b;white-space:nowrap;left:306.5px;letter-spacing:-0.2px;">图案叠加</div>
<div style="left:295.5px;top:257.2px;width:51px;height:1px;background:#e8e6ea;"></div>
<div style="left:297.5px;top:260.7px;width:6.6px;height:6.6px;background:#f8f8fa;border:1px solid #b9b7bc;"></div>
<div style="top:258.75px;font-size:7.5px;line-height:10.5px;color:#0a080b;white-space:nowrap;left:306.5px;letter-spacing:-0.2px;">外发光</div>
<div style="left:295.5px;top:270.2px;width:51px;height:1px;background:#e8e6ea;"></div>
<div style="left:297.5px;top:273.2px;width:6.6px;height:6.6px;background:#f8f8fa;border:1px solid #b9b7bc;"></div>
<div style="top:271.25px;font-size:7.5px;line-height:10.5px;color:#0a080b;white-space:nowrap;left:306.5px;letter-spacing:-0.2px;">投影</div>
<div style="left:295.5px;top:282.7px;width:51px;height:1px;background:#e8e6ea;"></div>
<div style="left:356px;top:104px;width:205.5px;height:257px;border:1px solid #d2d0d4;border-radius:2px;box-shadow:inset 1px 1px 0 #fbfafc, 1px 1px 0 #fbfafc;"></div>
<div style="left:367.5px;top:100px;width:32px;height:9px;background:#f0eef1;"></div>
<div style="top:99.05px;font-size:7.5px;line-height:10.5px;color:#0a080b;white-space:nowrap;left:369.5px;letter-spacing:-0.3px;">混合选项</div>
<div style="left:361.5px;top:116px;width:194px;height:38.5px;border:1px solid #d2d0d4;border-radius:2px;box-shadow:inset 1px 1px 0 #fbfafc, 1px 1px 0 #fbfafc;"></div>
<div style="left:373px;top:112px;width:32px;height:9px;background:#f0eef1;"></div>
<div style="top:111.05px;font-size:7.5px;line-height:10.5px;color:#0a080b;white-space:nowrap;left:375px;letter-spacing:-0.3px;">常规混合</div>
<div style="left:361.5px;top:161.5px;width:194px;height:96.5px;border:1px solid #d2d0d4;border-radius:2px;box-shadow:inset 1px 1px 0 #fbfafc, 1px 1px 0 #fbfafc;"></div>
<div style="left:373px;top:157.5px;width:32px;height:9px;background:#f0eef1;"></div>
<div style="top:156.55px;font-size:7.5px;line-height:10.5px;color:#0a080b;white-space:nowrap;left:375px;letter-spacing:-0.3px;">高级混合</div>
<div style="left:362px;top:266.5px;width:191.5px;height:69.5px;border:1px solid #d2d0d4;border-radius:2px;box-shadow:inset 1px 1px 0 #fbfafc, 1px 1px 0 #fbfafc;"></div>
<div style="top:125.10px;font-size:7.4px;line-height:10.4px;color:#0a080b;white-space:nowrap;right:580px;letter-spacing:-0.6px;">混合模式(D):</div>
<div style="left:423.5px;top:125.3px;width:76px;height:10.6px;background:#ffffff;border:1px solid #e3e1e5;border-radius:1px;"></div>
<div style="top:125.35px;font-size:7.5px;line-height:10.5px;color:#0a080b;white-space:nowrap;left:427.0px;">正常</div>
<svg style="left:492.0px;top:129.4px" width="5" height="3"><path d="M0 0 H5 L2.5 3 Z" fill="#111"/></svg>
<div style="top:138.00px;font-size:7.4px;line-height:10.4px;color:#0a080b;white-space:nowrap;right:580px;letter-spacing:-0.6px;">不透明度(O):</div>
<div style="left:424px;top:140.4px;width:60px;height:2.4px;background:#b9b7bb;border-top:1px solid #8f8d91;border-radius:1px;"></div>
<svg style="left:479.5px;top:142.1px" width="6.5" height="6.5" viewBox="0 0 6.5 6.5"><path d="M3.25 0.4 L6 3 V6 H0.5 V3 Z" fill="#f4f3f5" stroke="#8d8b90" stroke-width="0.8"/></svg>
<div style="left:488px;top:138.4px;width:30.5px;height:10.8px;background:#ffffff;border:1px solid #7fb0e2;"></div>
<div style="left:489.3px;top:139.8px;width:11.5px;height:8px;background:#3b8fe8;"></div>
<div style="top:138.80px;font-size:7px;line-height:10px;color:#ffffff;white-space:nowrap;left:490px;letter-spacing:-0.3px;">100</div>
<div style="top:138.20px;font-size:7.4px;line-height:10.4px;color:#0a080b;white-space:nowrap;left:520.5px;">%</div>
<div style="top:171.10px;font-size:7.4px;line-height:10.4px;color:#0a080b;white-space:nowrap;right:580px;letter-spacing:-0.35px;">填充不透明度(F):</div>
<div style="left:424px;top:173.4px;width:60px;height:2.4px;background:#b9b7bb;border-top:1px solid #8f8d91;border-radius:1px;"></div>
<svg style="left:479.5px;top:175.1px" width="6.5" height="6.5" viewBox="0 0 6.5 6.5"><path d="M3.25 0.4 L6 3 V6 H0.5 V3 Z" fill="#f4f3f5" stroke="#8d8b90" stroke-width="0.8"/></svg>
<div style="left:488px;top:171.6px;width:30.5px;height:10.4px;background:#ffffff;border:1px solid #e3e1e5;"></div>
<div style="top:171.80px;font-size:7px;line-height:10px;color:#0a080b;white-space:nowrap;left:491px;letter-spacing:-0.3px;">100</div>
<div style="top:171.20px;font-size:7.4px;line-height:10.4px;color:#0a080b;white-space:nowrap;left:520.5px;">%</div>
<div style="top:183.10px;font-size:7.4px;line-height:10.4px;color:#0a080b;white-space:nowrap;right:580px;">通道:</div>
<div style="left:423.3px;top:184.8px;width:6.4px;height:6.4px;background:#f8f8fa;border:1px solid #b9b7bc;"></div>
<svg style="left:423.90000000000003px;top:185.20000000000002px" width="6" height="6" viewBox="0 0 6 6"><path d="M1 2.8 L2.5 4.6 L5 0.8" stroke="#4a5f96" stroke-width="1" fill="none"/></svg>
<div style="top:183.50px;font-size:6.8px;line-height:9.8px;color:#0a080b;white-space:nowrap;left:431.7px;letter-spacing:-0.2px;">R(R)</div>
<div style="left:454px;top:184.8px;width:6.4px;height:6.4px;background:#f8f8fa;border:1px solid #b9b7bc;"></div>
<svg style="left:454.6px;top:185.20000000000002px" width="6" height="6" viewBox="0 0 6 6"><path d="M1 2.8 L2.5 4.6 L5 0.8" stroke="#4a5f96" stroke-width="1" fill="none"/></svg>
<div style="top:183.50px;font-size:6.8px;line-height:9.8px;color:#0a080b;white-space:nowrap;left:462.4px;letter-spacing:-0.2px;">G(G)</div>
<div style="left:484.6px;top:184.8px;width:6.4px;height:6.4px;background:#f8f8fa;border:1px solid #b9b7bc;"></div>
<svg style="left:485.20000000000005px;top:185.20000000000002px" width="6" height="6" viewBox="0 0 6 6"><path d="M1 2.8 L2.5 4.6 L5 0.8" stroke="#4a5f96" stroke-width="1" fill="none"/></svg>
<div style="top:183.50px;font-size:6.8px;line-height:9.8px;color:#0a080b;white-space:nowrap;left:493.0px;letter-spacing:-0.2px;">B(B)</div>
<div style="top:195.80px;font-size:7.4px;line-height:10.4px;color:#0a080b;white-space:nowrap;right:580px;letter-spacing:-0.25px;">挖空(N):</div>
<div style="left:423.5px;top:196px;width:32px;height:9.8px;background:#ffffff;border:1px solid #e3e1e5;border-radius:1px;"></div>
<div style="top:195.65px;font-size:7.5px;line-height:10.5px;color:#0a080b;white-space:nowrap;left:427.0px;">无</div>
<svg style="left:448.0px;top:199.70000000000002px" width="5" height="3"><path d="M0 0 H5 L2.5 3 Z" fill="#111"/></svg>
<div style="left:423.3px;top:209.60000000000002px;width:6.4px;height:6.4px;background:#f8f8fa;border:1px solid #b9b7bc;"></div>
<div style="top:207.80px;font-size:7.4px;line-height:10.4px;color:#0a080b;white-space:nowrap;left:432px;letter-spacing:-0.35px;">将内部效果混合成组(I)</div>
<div style="left:423.3px;top:218.70000000000002px;width:6.4px;height:6.4px;background:#f8f8fa;border:1px solid #b9b7bc;"></div>
<svg style="left:423.90000000000003px;top:219.10000000000002px" width="6" height="6" viewBox="0 0 6 6"><path d="M1 2.8 L2.5 4.6 L5 0.8" stroke="#4a5f96" stroke-width="1" fill="none"/></svg>
<div style="top:216.90px;font-size:7.4px;line-height:10.4px;color:#0a080b;white-space:nowrap;left:432px;letter-spacing:-0.35px;">将剪贴图层混合成组(P)</div>
<div style="left:423.3px;top:228.60000000000002px;width:6.4px;height:6.4px;background:#f8f8fa;border:1px solid #b9b7bc;"></div>
<svg style="left:423.90000000000003px;top:229.00000000000003px" width="6" height="6" viewBox="0 0 6 6"><path d="M1 2.8 L2.5 4.6 L5 0.8" stroke="#4a5f96" stroke-width="1" fill="none"/></svg>
<div style="top:226.80px;font-size:7.4px;line-height:10.4px;color:#0a080b;white-space:nowrap;left:432px;letter-spacing:-0.35px;">透明形状图层(T)</div>
<div style="left:423.3px;top:237.4px;width:6.4px;height:6.4px;background:#f8f8fa;border:1px solid #b9b7bc;"></div>
<div style="top:235.60px;font-size:7.4px;line-height:10.4px;color:#0a080b;white-space:nowrap;left:432px;letter-spacing:-0.35px;">图层蒙版隐藏效果(S)</div>
<div style="left:423.3px;top:246.60000000000002px;width:6.4px;height:6.4px;background:#f8f8fa;border:1px solid #b9b7bc;"></div>
<div style="top:244.80px;font-size:7.4px;line-height:10.4px;color:#0a080b;white-space:nowrap;left:432px;letter-spacing:-0.35px;">矢量蒙版隐藏效果(H)</div>
<div style="left:381px;top:262px;width:84px;height:9px;background:#f0eef1;"></div>
<div style="top:264.30px;font-size:7.4px;line-height:10.4px;color:#0a080b;white-space:nowrap;right:572.5px;letter-spacing:-0.3px;">混合颜色带(E):</div>
<div style="left:431px;top:264.2px;width:32.5px;height:10px;background:#ffffff;border:1px solid #e3e1e5;border-radius:1px;"></div>
<div style="top:263.95px;font-size:7.5px;line-height:10.5px;color:#0a080b;white-space:nowrap;left:434.5px;">灰色</div>
<svg style="left:456.0px;top:268.0px" width="5" height="3"><path d="M0 0 H5 L2.5 3 Z" fill="#111"/></svg>
<div style="top:279.40px;font-size:7.4px;line-height:10.4px;color:#0a080b;white-space:nowrap;right:579.5px;letter-spacing:-0.3px;">本图层:</div>
<div style="top:279.90px;font-size:6.8px;line-height:9.8px;color:#0a080b;white-space:nowrap;left:434.5px;letter-spacing:-0.3px;">176</div>
<div style="top:279.90px;font-size:6.8px;line-height:9.8px;color:#0a080b;white-space:nowrap;left:489px;letter-spacing:-0.3px;">255</div>
<div style="top:306.50px;font-size:7.4px;line-height:10.4px;color:#0a080b;white-space:nowrap;right:579.5px;letter-spacing:-0.3px;">下一图层:</div>
<div style="top:307.00px;font-size:6.8px;line-height:9.8px;color:#0a080b;white-space:nowrap;left:442px;">0</div>
<div style="top:307.00px;font-size:6.8px;line-height:9.8px;color:#0a080b;white-space:nowrap;left:489px;letter-spacing:-0.3px;">255</div>
<div style="left:371.3px;top:291.8px;width:148.2px;height:5.6px;background:linear-gradient(90deg,#000,#fff);"></div>
<svg style="left:470.2px;top:298.6px" width="6" height="5.6" viewBox="0 0 6 5.6"><path d="M3 0.3 L5.6 3 V5.2 H0.4 V3 Z" fill="#1c1a1d" stroke="#55535a" stroke-width="0.7"/></svg>
<svg style="left:516px;top:298.6px" width="6" height="5.6" viewBox="0 0 6 5.6"><path d="M3 0.3 L5.6 3 V5.2 H0.4 V3 Z" fill="#cfcdd1" stroke="#55535a" stroke-width="0.7"/></svg>
<div style="left:371.3px;top:319.2px;width:148.2px;height:5.6px;background:linear-gradient(90deg,#000,#fff);"></div>
<svg style="left:368.3px;top:325.8px" width="6" height="5.6" viewBox="0 0 6 5.6"><path d="M3 0.3 L5.6 3 V5.2 H0.4 V3 Z" fill="#1c1a1d" stroke="#55535a" stroke-width="0.7"/></svg>
<svg style="left:516px;top:325.8px" width="6" height="5.6" viewBox="0 0 6 5.6"><path d="M3 0.3 L5.6 3 V5.2 H0.4 V3 Z" fill="#cfcdd1" stroke="#55535a" stroke-width="0.7"/></svg>
<div style="left:571px;top:103px;width:64px;height:10.6px;background:linear-gradient(#e9f5fc 0%,#d6edfa 48%,#bfe2f6 52%,#a9d6f0 100%);border:1px solid #3c7fb1;border-radius:2px;box-shadow:inset 0 0 0 1px #8fdaf6;"></div>
<div style="top:104.25px;font-size:7.5px;line-height:10.5px;color:#0a080b;white-space:nowrap;left:503.0px;width:200px;text-align:center;letter-spacing:-0.2px;">确定</div>
<div style="left:571px;top:119px;width:64px;height:10.6px;background:linear-gradient(#f4f3f5 0%,#ececee 48%,#dedde0 52%,#d2d0d4 100%);border:1px solid #77757a;border-radius:2px;box-shadow:inset 0 0 0 1px #fbfbfc;"></div>
<div style="top:120.25px;font-size:7.5px;line-height:10.5px;color:#0a080b;white-space:nowrap;left:503.0px;width:200px;text-align:center;letter-spacing:-0.2px;">取消</div>
<div style="left:571px;top:135px;width:64px;height:10.8px;background:linear-gradient(#f4f3f5 0%,#ececee 48%,#dedde0 52%,#d2d0d4 100%);border:1px solid #77757a;border-radius:2px;box-shadow:inset 0 0 0 1px #fbfbfc;"></div>
<div style="top:136.35px;font-size:7.5px;line-height:10.5px;color:#0a080b;white-space:nowrap;left:503.0px;width:200px;text-align:center;letter-spacing:-0.2px;">新建样式(W)...</div>
<div style="left:584.3px;top:150.9px;width:6.8px;height:6.8px;background:#f8f8fa;border:1px solid #b9b7bc;"></div>
<svg style="left:584.9px;top:151.3px" width="6" height="6" viewBox="0 0 6 6"><path d="M1 2.8 L2.5 4.6 L5 0.8" stroke="#4a5f96" stroke-width="1" fill="none"/></svg>
<div style="top:149.35px;font-size:7.5px;line-height:10.5px;color:#0a080b;white-space:nowrap;left:593.5px;letter-spacing:-0.2px;">预览(V)</div>
<div style="left:584px;top:163px;width:38.5px;height:37.5px;background:#d3d1d5;border:1px solid #c6c4c8;"></div>
<div style="left:824px;top:39px;width:176px;height:380px;background:#39373a;"></div>
<div style="left:824px;top:50px;width:11px;height:369px;background:#3d3b3e;"></div>
<div style="left:835px;top:39px;width:165px;height:5px;background:#343235;"></div>
<svg style="left:849px;top:40px" width="6" height="3.6"><path d="M2.6 0 L0 1.8 L2.6 3.6 Z M6 0 L3.4 1.8 L6 3.6 Z" fill="#c8c8c8"/></svg>
<svg style="left:989px;top:40px" width="6" height="3.6"><path d="M2.6 0 L0 1.8 L2.6 3.6 Z M6 0 L3.4 1.8 L6 3.6 Z" fill="#c8c8c8"/></svg>
<div style="left:995px;top:0px;width:5px;height:419px;background:#2e2d2f;"></div>
<div style="left:835px;top:44px;width:22.5px;height:375px;background:#514f52;"></div>
<div style="left:857.5px;top:44px;width:1.5px;height:375px;background:#2f2d30;"></div>
<div style="left:834.5px;top:44px;width:1px;height:375px;background:#2f2d30;"></div>
<div style="left:835px;top:68px;width:22.5px;height:1.6px;background:#333134;"></div>
<div style="left:835px;top:92px;width:22.5px;height:1.6px;background:#333134;"></div>
<div style="left:835px;top:130px;width:22.5px;height:1.6px;background:#333134;"></div>
<div style="left:841px;top:48.5px;width:10px;height:2px;border-top:1px dotted #858386;border-bottom:1px dotted #858386;"></div>
<div style="left:841px;top:72.5px;width:10px;height:2px;border-top:1px dotted #858386;border-bottom:1px dotted #858386;"></div>
<div style="left:841px;top:96.5px;width:10px;height:2px;border-top:1px dotted #858386;border-bottom:1px dotted #858386;"></div>
<div style="left:838px;top:52px;width:16px;height:14px;background:#39373a;border:1px solid #7b797c;border-radius:1px;"></div>
<svg style="left:840px;top:53.5px" width="12" height="11" viewBox="0 0 12 11" fill="none" stroke="#dddbde" stroke-width="1"><rect x="1" y="1.2" width="3.6" height="8.6" fill="#8f8d90"/><path d="M2 3 h1.6 M2 5 h1.6 M2 7 h1.6" stroke-width="0.7"/><path d="M6.6 3.6 A2.6 3 0 1 1 8.6 8.6 M6.6 3.6 l-0.4 -1.6 M6.6 3.6 l1.6 0" /></svg>
<svg style="left:840px;top:77px" width="12" height="12" viewBox="0 0 12 12" fill="none" stroke="#dddbde" stroke-width="1"><rect x="1" y="2.4" width="4.6" height="4" fill="#a9a7aa"/><path d="M7.4 2.6 v1.6 M10 2.6 v1.6 M7.4 5.4 v1.6 M10 5.4 v1.6" stroke-width="1.4"/><path d="M1 9.4 H11" stroke-width="1.6"/></svg>
<div style="top:99.30px;font-size:11px;line-height:14px;color:#dddbde;white-space:nowrap;left:840.5px;">A</div>
<div style="left:850px;top:101px;width:1px;height:11px;background:#d9a54a;"></div>
<svg style="left:841px;top:115.5px" width="10" height="11" viewBox="0 0 10 11"><path d="M6.4 1 H4 A2.6 2.6 0 0 0 4 6.2 H5 V10 M7.6 1 V10 M4 1 H9" stroke="#dddbde" stroke-width="1.3" fill="#dddbde"/></svg>
<div style="left:711px;top:44px;width:124px;height:84px;background:#2e2c2f;"></div>
<div style="left:712px;top:45px;width:121.5px;height:11px;background:#3c3a3d;"></div>
<div style="left:713px;top:45.5px;width:33px;height:10.5px;background:#535154;"></div>
<div style="top:45.80px;font-size:7.4px;line-height:10.4px;color:#dddbde;white-space:nowrap;left:715.5px;letter-spacing:-0.4px;">历史记录</div>
<svg style="left:810px;top:48.5px" width="7" height="5"><path d="M0 0 L3 2.5 L0 5 Z M4 0 L7 2.5 L4 5 Z" fill="#e8e8e8"/></svg>
<div style="left:820.5px;top:46px;width:1px;height:9px;background:#2f2d30;"></div>
<svg style="left:824px;top:48.5px" width="8" height="5"><path d="M0 0.5 H2.6 L1.3 2.2 Z" fill="#d0d0d0"/><path d="M3.4 0.6 H8 M3.4 2.4 H8 M3.4 4.2 H8" stroke="#d0d0d0" stroke-width="0.9"/></svg>
<div style="left:712px;top:56px;width:113px;height:3px;background:#535154;"></div>
<div style="left:712px;top:58.8px;width:113px;height:13.4px;background:#535154;border-bottom:1px solid #454346;"></div>
<div style="left:724.5px;top:58.8px;width:1px;height:13.4px;background:#454346;"></div>
<div style="left:716.5px;top:62.4px;width:6px;height:6px;border:1px solid #605e61;"></div>
<div style="left:731px;top:61.4px;width:7.5px;height:9px;background:#8f8d90;border:1px solid #bdbbbe;"></div>
<div style="left:732.6px;top:64.0px;width:4.4px;height:1px;background:#d6d4d7;"></div>
<div style="left:732.6px;top:66.2px;width:4.4px;height:1px;background:#d6d4d7;"></div>
<div style="top:60.65px;font-size:7.5px;line-height:10.5px;color:#e8e6e9;white-space:nowrap;left:746px;letter-spacing:-0.3px;">色彩范围</div>
<div style="left:712px;top:72.2px;width:113px;height:13.4px;background:#535154;border-bottom:1px solid #454346;"></div>
<div style="left:724.5px;top:72.2px;width:1px;height:13.4px;background:#454346;"></div>
<div style="left:716.5px;top:75.8px;width:6px;height:6px;border:1px solid #605e61;"></div>
<div style="left:731px;top:74.8px;width:7.5px;height:9px;background:#8f8d90;border:1px solid #bdbbbe;"></div>
<div style="left:732.6px;top:77.4px;width:4.4px;height:1px;background:#d6d4d7;"></div>
<div style="left:732.6px;top:79.60000000000001px;width:4.4px;height:1px;background:#d6d4d7;"></div>
<div style="top:74.05px;font-size:7.5px;line-height:10.5px;color:#e8e6e9;white-space:nowrap;left:746px;letter-spacing:-0.3px;">清除</div>
<div style="left:712px;top:85.6px;width:113px;height:13.4px;background:#535154;border-bottom:1px solid #454346;"></div>
<div style="left:724.5px;top:85.6px;width:1px;height:13.4px;background:#454346;"></div>
<div style="left:716.5px;top:89.19999999999999px;width:6px;height:6px;border:1px solid #605e61;"></div>
<div style="left:731px;top:88.19999999999999px;width:7.5px;height:9px;background:#8f8d90;border:1px solid #bdbbbe;"></div>
<div style="left:732.6px;top:90.8px;width:4.4px;height:1px;background:#d6d4d7;"></div>
<div style="left:732.6px;top:93.0px;width:4.4px;height:1px;background:#d6d4d7;"></div>
<div style="top:87.45px;font-size:7.5px;line-height:10.5px;color:#e8e6e9;white-space:nowrap;left:746px;letter-spacing:-0.3px;">取消选择</div>
<div style="left:712px;top:99px;width:113px;height:13.4px;background:#4d6386;border-bottom:1px solid #454346;"></div>
<div style="left:724.5px;top:99px;width:1px;height:13.4px;background:#454346;"></div>
<div style="left:716.5px;top:102.6px;width:6px;height:6px;border:1px solid #6f86ad;"></div>
<div style="left:731px;top:101.6px;width:7.5px;height:9px;background:#8f8d90;border:1px solid #bdbbbe;"></div>
<div style="left:732.6px;top:104.2px;width:4.4px;height:1px;background:#d6d4d7;"></div>
<div style="left:732.6px;top:106.4px;width:4.4px;height:1px;background:#d6d4d7;"></div>
<div style="top:100.85px;font-size:7.5px;line-height:10.5px;color:#e8e6e9;white-space:nowrap;left:746px;letter-spacing:-0.3px;">色相/饱和度</div>
<div style="left:825px;top:56px;width:9px;height:56px;background:#48464a;"></div>
<div style="left:712px;top:112.2px;width:122px;height:15px;background:#4c4a4d;border-top:1px solid #3a383b;"></div>
<svg style="left:774px;top:114.5px" width="10" height="9" viewBox="0 0 10 9"><path d="M1 8 H9 V5.4 H7.4 L6.4 3 H3.6 L2.6 5.4 H1 Z" fill="#cfcdd0"/><circle cx="5" cy="2" r="1.6" fill="#cfcdd0"/></svg>
<svg style="left:792.5px;top:115.5px" width="9" height="7" viewBox="0 0 9 7"><rect x="0.6" y="1" width="7.8" height="5.4" fill="none" stroke="#cfcdd0" stroke-width="1.2"/><circle cx="4.5" cy="3.7" r="1.3" fill="#cfcdd0"/></svg>
<svg style="left:810.5px;top:114.8px" width="8" height="8.4" viewBox="0 0 8 8.4"><path d="M0.6 1.8 H7.4 M3 0.8 H5 M1.4 2.6 L1.9 7.8 H6.1 L6.6 2.6 Z" fill="#bdbbbe" stroke="#cfcdd0" stroke-width="0.9"/></svg>
<div style="left:760px;top:127.2px;width:14px;height:1px;background:#5d5b5e;"></div>
<div style="left:859px;top:45px;width:136px;height:10.5px;background:#3c3a3d;"></div>
<div style="left:859px;top:55.5px;width:136px;height:65.0px;background:#535154;"></div>
<div style="left:860.0px;top:45.5px;width:19px;height:10px;background:#535154;border-top:1px solid #636164;"></div>
<div style="top:45.50px;font-size:7.4px;line-height:10.4px;color:#f0eef1;white-space:nowrap;left:862.5px;letter-spacing:-0.4px;">颜色</div>
<div style="top:45.50px;font-size:7.4px;line-height:10.4px;color:#9a989b;white-space:nowrap;left:884px;letter-spacing:-0.4px;">色板</div>
<svg style="left:985px;top:48.5px" width="8" height="5"><path d="M0 0.5 H2.6 L1.3 2.2 Z" fill="#d0d0d0"/><path d="M3.4 0.6 H8 M3.4 2.4 H8 M3.4 4.2 H8" stroke="#d0d0d0" stroke-width="0.9"/></svg>
<div style="left:867.4px;top:67.8px;width:10.5px;height:10.8px;background:#ffffff;border:1px solid #e0e0e0;"></div>
<div style="left:862px;top:62.3px;width:9.8px;height:9.8px;background:#050505;border:1px solid #8a888b;"></div>
<div style="top:61.80px;font-size:6.6px;line-height:9.6px;color:#8f8d90;white-space:nowrap;left:884.5px;">R</div>
<div style="left:893.5px;top:63.1px;width:45.5px;height:4.2px;background:linear-gradient(90deg,#000 0%,#f02a2a 100%);border:1px solid #2a282b;border-right-color:#f02a2a;border-radius:1px;"></div>
<svg style="left:891.6px;top:68.0px" width="5.4" height="4"><path d="M2.7 0 L5.4 4 H0 Z" fill="#cfcdd0"/></svg>
<div style="left:943px;top:61.4px;width:29.5px;height:11px;background:#464447;border:1px solid #3d3b3e;"></div>
<div style="top:62.20px;font-size:6.6px;line-height:9.6px;color:#6f6d70;white-space:nowrap;left:946.5px;">0</div>
<div style="top:75.80px;font-size:6.6px;line-height:9.6px;color:#8f8d90;white-space:nowrap;left:884.5px;">G</div>
<div style="left:893.5px;top:77.10000000000001px;width:45.5px;height:4.2px;background:linear-gradient(90deg,#000 0%,#22d43a 100%);border:1px solid #2a282b;border-right-color:#22d43a;border-radius:1px;"></div>
<svg style="left:891.6px;top:82.0px" width="5.4" height="4"><path d="M2.7 0 L5.4 4 H0 Z" fill="#cfcdd0"/></svg>
<div style="left:943px;top:75.4px;width:29.5px;height:11px;background:#464447;border:1px solid #3d3b3e;"></div>
<div style="top:76.20px;font-size:6.6px;line-height:9.6px;color:#6f6d70;white-space:nowrap;left:946.5px;">0</div>
<div style="top:89.80px;font-size:6.6px;line-height:9.6px;color:#8f8d90;white-space:nowrap;left:884.5px;">B</div>
<div style="left:893.5px;top:91.10000000000001px;width:45.5px;height:4.2px;background:linear-gradient(90deg,#000 0%,#2038e8 100%);border:1px solid #2a282b;border-right-color:#2038e8;border-radius:1px;"></div>
<svg style="left:891.6px;top:96.0px" width="5.4" height="4"><path d="M2.7 0 L5.4 4 H0 Z" fill="#cfcdd0"/></svg>
<div style="left:943px;top:89.4px;width:29.5px;height:11px;background:#464447;border:1px solid #3d3b3e;"></div>
<div style="top:90.20px;font-size:6.6px;line-height:9.6px;color:#6f6d70;white-space:nowrap;left:946.5px;">0</div>
<div style="left:862.5px;top:108.2px;width:114.5px;height:9px;background:linear-gradient(180deg,rgba(255,255,255,0.85) 0%,rgba(255,255,255,0) 45%,rgba(0,0,0,0) 55%,rgba(0,0,0,0.9) 100%),linear-gradient(90deg,#ff0000 0%,#ffff00 17%,#00ff00 33%,#00ffff 50%,#0000ff 67%,#ff00ff 83%,#ff0000 100%);"></div>
<div style="left:972.5px;top:108.2px;width:4.5px;height:4.5px;background:#ffffff;"></div>
<div style="left:972.5px;top:112.7px;width:4.5px;height:4.5px;background:#000000;"></div>
<div style="left:859px;top:120.5px;width:136px;height:1.2px;background:#2f2d30;"></div>
<div style="left:859px;top:121.6px;width:136px;height:10.5px;background:#3c3a3d;"></div>
<div style="left:859px;top:132.1px;width:136px;height:65.5px;background:#535154;"></div>
<div style="left:860.0px;top:122.1px;width:19px;height:10px;background:#535154;border-top:1px solid #636164;"></div>
<div style="top:122.10px;font-size:7.4px;line-height:10.4px;color:#f0eef1;white-space:nowrap;left:862.5px;letter-spacing:-0.4px;">调整</div>
<div style="top:122.10px;font-size:7.4px;line-height:10.4px;color:#9a989b;white-space:nowrap;left:885px;letter-spacing:-0.4px;">样式</div>
<svg style="left:985px;top:125.1px" width="8" height="5"><path d="M0 0.5 H2.6 L1.3 2.2 Z" fill="#d0d0d0"/><path d="M3.4 0.6 H8 M3.4 2.4 H8 M3.4 4.2 H8" stroke="#d0d0d0" stroke-width="0.9"/></svg>
<div style="top:134.00px;font-size:7.4px;line-height:10.4px;color:#a3a1a4;white-space:nowrap;left:864.5px;letter-spacing:-0.6px;">添加调整</div>
<svg style="left:884.9px;top:149px" width="11" height="10" viewBox="0 0 11 10" fill="none" stroke="#d6d4d7" stroke-width="1"><circle cx="5.5" cy="5" r="1.8" fill="#d6d4d7"/><path d="M5.5 0.4 v1.6 M5.5 8 v1.6 M0.8 5 h1.7 M8.5 5 h1.7 M2.2 1.7 l1.1 1.1 M7.7 7.2 l1.1 1.1 M8.8 1.7 l-1.1 1.1 M3.3 7.2 l-1.1 1.1" stroke-width="0.9"/></svg>
<svg style="left:899.1px;top:149px" width="11" height="10" viewBox="0 0 11 10" fill="none" stroke="#d6d4d7" stroke-width="1"><path d="M0.8 8.6 H10.2 M1.8 8 V5 M3.3 8 V3 M4.8 8 V4.4 M6.3 8 V2.4 M7.8 8 V4 M9.3 8 V5.6" stroke-width="1.1"/></svg>
<svg style="left:913.3px;top:149px" width="11" height="10" viewBox="0 0 11 10" fill="none" stroke="#d6d4d7" stroke-width="1"><rect x="1" y="0.8" width="9" height="8.4"/><path d="M1.4 8.6 Q5 8 5.5 5 Q6 2 9.6 1.4" stroke-width="1.1"/><path d="M4 1 V9 M7 1 V9 M1 3.6 H10 M1 6.4 H10" stroke-width="0.35"/></svg>
<svg style="left:927.5px;top:149px" width="11" height="10" viewBox="0 0 11 10" fill="none" stroke="#d6d4d7" stroke-width="1"><rect x="1" y="0.8" width="9" height="8.4"/><path d="M1.4 8.8 L9.6 1.2 V8.8 Z" fill="#d6d4d7" stroke="none"/><path d="M2.4 3 h2.4 M3.6 1.8 v2.4" stroke-width="0.8"/></svg>
<svg style="left:941.6999999999999px;top:149px" width="11" height="10" viewBox="0 0 11 10" fill="none" stroke="#d6d4d7" stroke-width="1"><path d="M1 1 H10 L5.5 9.2 Z" stroke-width="1.3"/></svg>
<svg style="left:878.5px;top:164.8px" width="11" height="10" viewBox="0 0 11 10" fill="none" stroke="#d6d4d7" stroke-width="1"><rect x="1" y="0.8" width="9" height="8.4" /><rect x="1.4" y="5.2" width="8.2" height="3.6" fill="#d6d4d7" stroke="none"/><path d="M1 3.2 H10" stroke-width="0.8"/></svg>
<svg style="left:892.5px;top:164.8px" width="11" height="10" viewBox="0 0 11 10" fill="none" stroke="#d6d4d7" stroke-width="1"><path d="M5.5 1 V3 M1.4 3.4 H9.6 M1 7.6 L2.6 3.6 L4.2 7.6 Z M6.8 7.6 L8.4 3.6 L10 7.6 Z" stroke-width="0.9"/><path d="M1 7.6 Q2.6 9.6 4.2 7.6 M6.8 7.6 Q8.4 9.6 10 7.6" stroke-width="0.9"/></svg>
<svg style="left:906.5px;top:164.8px" width="11" height="10" viewBox="0 0 11 10" fill="none" stroke="#d6d4d7" stroke-width="1"><rect x="1" y="0.8" width="9" height="8.4"/><rect x="5.5" y="1.2" width="4.1" height="7.6" fill="#d6d4d7" stroke="none"/></svg>
<svg style="left:920.5px;top:164.8px" width="11" height="10" viewBox="0 0 11 10" fill="none" stroke="#d6d4d7" stroke-width="1"><rect x="0.8" y="0.8" width="6.4" height="5.4" fill="#8f8d90"/><circle cx="7" cy="6.4" r="2.8" fill="#535154"/></svg>
<svg style="left:934.5px;top:164.8px" width="11" height="10" viewBox="0 0 11 10" fill="none" stroke="#d6d4d7" stroke-width="1"><circle cx="5.5" cy="3.2" r="2.5" fill="#d6d4d7" fill-opacity="0.8"/><circle cx="3.6" cy="6.6" r="2.5" fill="#d6d4d7" fill-opacity="0.8"/><circle cx="7.4" cy="6.6" r="2.5" fill="#d6d4d7" fill-opacity="0.8"/></svg>
<svg style="left:948.5px;top:164.8px" width="11" height="10" viewBox="0 0 11 10" fill="none" stroke="#d6d4d7" stroke-width="1"><rect x="1" y="0.8" width="9" height="8.4" fill="#8f8d90"/><path d="M4 1 V9 M7 1 V9 M1 3.6 H10 M1 6.4 H10" stroke-width="0.8"/></svg>
<svg style="left:884.9px;top:179.8px" width="11" height="10" viewBox="0 0 11 10" fill="none" stroke="#d6d4d7" stroke-width="1"><rect x="1" y="0.8" width="9" height="8.4"/><path d="M1.4 8.8 L9.6 1.2 V8.8 Z" fill="#d6d4d7" stroke="none"/><circle cx="6.6" cy="5.6" r="1.4" fill="#535154" stroke="none"/></svg>
<svg style="left:899.1px;top:179.8px" width="11" height="10" viewBox="0 0 11 10" fill="none" stroke="#d6d4d7" stroke-width="1"><rect x="1" y="0.8" width="9" height="8.4"/><path d="M1.4 8.8 L9.6 3 V8.8 Z" fill="#d6d4d7" stroke="none"/><path d="M1.4 6 L9.6 1.4" stroke-width="1"/></svg>
<svg style="left:913.3px;top:179.8px" width="11" height="10" viewBox="0 0 11 10" fill="none" stroke="#d6d4d7" stroke-width="1"><rect x="1" y="0.8" width="9" height="8.4"/><path d="M1.4 7 L4 7 L4 5 L7 5 L7 3 L9.6 3 V8.8 H1.4 Z" fill="#d6d4d7" stroke="none"/></svg>
<svg style="left:927.5px;top:179.8px" width="11" height="10" viewBox="0 0 11 10" fill="none" stroke="#d6d4d7" stroke-width="1"><rect x="1" y="0.8" width="9" height="8.4"/><path d="M1.4 1.2 L5.5 5 L9.6 1.2 V8.8 H1.4 Z" fill="#d6d4d7" fill-opacity="0.8" stroke="none"/></svg>
<svg style="left:941.6999999999999px;top:179.8px" width="11" height="10" viewBox="0 0 11 10" fill="none" stroke="#d6d4d7" stroke-width="1"><rect x="1" y="0.8" width="9" height="8.4"/><rect x="1.4" y="1.2" width="3" height="7.6" fill="#222" stroke="none"/><rect x="6" y="1.2" width="3.6" height="7.6" fill="#d6d4d7" stroke="none"/></svg>
<div style="left:859px;top:197.4px;width:136px;height:1.2px;background:#2f2d30;"></div>
<div style="left:859px;top:198.4px;width:136px;height:10.5px;background:#3c3a3d;"></div>
<div style="left:859px;top:208.9px;width:136px;height:210.1px;background:#474548;"></div>
<div style="left:860.0px;top:198.9px;width:19px;height:10px;background:#535154;border-top:1px solid #636164;"></div>
<div style="top:198.90px;font-size:7.4px;line-height:10.4px;color:#f0eef1;white-space:nowrap;left:862.5px;letter-spacing:-0.4px;">图层</div>
<div style="top:198.90px;font-size:7.4px;line-height:10.4px;color:#9a989b;white-space:nowrap;left:884.5px;letter-spacing:-0.4px;">通道</div>
<div style="top:198.90px;font-size:7.4px;line-height:10.4px;color:#9a989b;white-space:nowrap;left:906px;letter-spacing:-0.4px;">路径</div>
<svg style="left:985px;top:201.9px" width="8" height="5"><path d="M0 0.5 H2.6 L1.3 2.2 Z" fill="#d0d0d0"/><path d="M3.4 0.6 H8 M3.4 2.4 H8 M3.4 4.2 H8" stroke="#d0d0d0" stroke-width="0.9"/></svg>
<div style="left:859px;top:209px;width:136px;height:47.5px;background:#535154;"></div>
<div style="left:861.5px;top:210.5px;width:40px;height:11.5px;background:#4c4a4d;border:1px solid #3d3b3e;"></div>
<svg style="left:864px;top:213px" width="6" height="7" viewBox="0 0 6 7"><circle cx="3.4" cy="2.4" r="1.8" fill="none" stroke="#b5b3b6" stroke-width="0.9"/><path d="M2.2 3.8 L0.6 6.4" stroke="#b5b3b6" stroke-width="1"/></svg>
<div style="top:211.20px;font-size:7.4px;line-height:10.4px;color:#c9c7ca;white-space:nowrap;left:871px;letter-spacing:-0.4px;">类型</div>
<svg style="left:894px;top:213.2px" width="4" height="7"><path d="M0 2.6 L2 0.4 L4 2.6 Z M0 4.4 L2 6.6 L4 4.4 Z" fill="#b0aeb1"/></svg>
<svg style="left:912.5px;top:211.8px" width="9" height="9" viewBox="0 0 9 9" stroke="#9a989b" stroke-width="0.9"><rect x="1" y="1.6" width="7" height="5.8" fill="none"/><path d="M1.6 6.6 L3.6 4.2 L5 5.6 L6.2 4.6 L7.6 6.6" stroke-width="0.7"/></svg>
<svg style="left:926.5px;top:211.8px" width="9" height="9" viewBox="0 0 9 9" stroke="#9a989b" stroke-width="0.9"><circle cx="4.5" cy="4.5" r="3.2" fill="none"/><path d="M4.5 1.3 A3.2 3.2 0 0 1 4.5 7.7 Z" fill="#9a989b" stroke="none"/></svg>
<svg style="left:940.5px;top:211.8px" width="9" height="9" viewBox="0 0 9 9" stroke="#9a989b" stroke-width="0.9"><path d="M1.6 1.6 H7.4 M4.5 1.6 V7.6" stroke-width="1.3"/></svg>
<svg style="left:954.5px;top:211.8px" width="9" height="9" viewBox="0 0 9 9" stroke="#9a989b" stroke-width="0.9"><rect x="1.6" y="1.8" width="5.8" height="5.4" fill="none"/><rect x="0.8" y="1" width="1.6" height="1.6" fill="#9a989b" stroke="none"/><rect x="6.6" y="1" width="1.6" height="1.6" fill="#9a989b" stroke="none"/><rect x="0.8" y="6.4" width="1.6" height="1.6" fill="#9a989b" stroke="none"/><rect x="6.6" y="6.4" width="1.6" height="1.6" fill="#9a989b" stroke="none"/></svg>
<svg style="left:968.5px;top:211.8px" width="9" height="9" viewBox="0 0 9 9" stroke="#9a989b" stroke-width="0.9"><rect x="1.4" y="1.4" width="4.6" height="4.6" fill="none"/><path d="M5.2 4.2 H7.8 V7.8 H3.6 V6" fill="none"/></svg>
<div style="left:990.5px;top:211.5px;width:3px;height:8px;background:#6d6b6e;border-radius:1px;"></div>
<div style="left:859px;top:223.4px;width:136px;height:1px;background:#434144;"></div>
<div style="left:861.5px;top:225.5px;width:64px;height:12.6px;background:#504e51;border:1px solid #3d3b3e;"></div>
<div style="top:226.70px;font-size:7.4px;line-height:10.4px;color:#bdbbbe;white-space:nowrap;left:865px;letter-spacing:-0.4px;">正常</div>
<svg style="left:918.5px;top:228.6px" width="4" height="7"><path d="M0 2.6 L2 0.4 L4 2.6 Z M0 4.4 L2 6.6 L4 4.4 Z" fill="#b0aeb1"/></svg>
<div style="top:226.70px;font-size:7.4px;line-height:10.4px;color:#c4c2c5;white-space:nowrap;left:929px;letter-spacing:-0.55px;">不透明度:</div>
<div style="left:962px;top:225.8px;width:19px;height:12px;background:#474548;border:1px solid #3b393c;"></div>
<div style="top:227.30px;font-size:6.4px;line-height:9.4px;color:#77757a;white-space:nowrap;left:964.5px;letter-spacing:-0.3px;">100%</div>
<div style="left:985.5px;top:226.2px;width:8px;height:11px;background:#5e5c5f;border:1px solid #3b393c;"></div>
<svg style="left:987.5px;top:230.6px" width="4" height="2.6"><path d="M0 0 H4 L2 2.6 Z" fill="#d0d0d0"/></svg>
<div style="top:242.70px;font-size:7.4px;line-height:10.4px;color:#c4c2c5;white-space:nowrap;left:862px;letter-spacing:-0.4px;">锁定:</div>
<svg style="left:882.5px;top:243.4px" width="9" height="9" viewBox="0 0 9 9" stroke="#bdbbbe" stroke-width="0.9"><rect x="1.2" y="1.2" width="6.6" height="6.6" fill="none" stroke-dasharray="1.1 1.1"/><rect x="3" y="3" width="3" height="3" fill="#bdbbbe" stroke="none"/></svg>
<svg style="left:895.1px;top:243.4px" width="9" height="9" viewBox="0 0 9 9" stroke="#bdbbbe" stroke-width="0.9"><path d="M7.8 1 L3.6 5.6" stroke-width="1.5"/><path d="M3.2 5.6 Q1.8 6 2 7.2 Q1.8 7.8 1 8.2 Q3.2 8.4 3.8 7 Q4 6.2 3.2 5.6 Z" fill="#bdbbbe" stroke="none"/></svg>
<svg style="left:907.7px;top:243.4px" width="9" height="9" viewBox="0 0 9 9" stroke="#bdbbbe" stroke-width="0.9"><path d="M4.5 0.8 V8.2 M0.8 4.5 H8.2 M4.5 0.8 l-1 1 M4.5 0.8 l1 1 M4.5 8.2 l-1 -1 M4.5 8.2 l1 -1 M0.8 4.5 l1 -1 M0.8 4.5 l1 1 M8.2 4.5 l-1 -1 M8.2 4.5 l-1 1" stroke-width="0.8" fill="none"/></svg>
<svg style="left:920.3px;top:243.4px" width="9" height="9" viewBox="0 0 9 9" stroke="#bdbbbe" stroke-width="0.9"><rect x="1.6" y="4" width="5.8" height="4" fill="#bdbbbe" stroke="none"/><path d="M2.8 4 V2.8 A1.7 1.7 0 0 1 6.2 2.8 V4" fill="none" stroke-width="1"/></svg>
<div style="top:242.70px;font-size:7.4px;line-height:10.4px;color:#c4c2c5;white-space:nowrap;left:943.5px;letter-spacing:-0.4px;">填充:</div>
<div style="left:962px;top:241.8px;width:19px;height:12px;background:#474548;border:1px solid #3b393c;"></div>
<div style="top:243.30px;font-size:6.4px;line-height:9.4px;color:#77757a;white-space:nowrap;left:964.5px;letter-spacing:-0.3px;">100%</div>
<div style="left:985.5px;top:242.2px;width:8px;height:11px;background:#5e5c5f;border:1px solid #3b393c;"></div>
<svg style="left:987.5px;top:246.6px" width="4" height="2.6"><path d="M0 0 H4 L2 2.6 Z" fill="#d0d0d0"/></svg>
<div style="left:859px;top:256px;width:136px;height:1.4px;background:#3a383b;"></div>
<div style="left:859px;top:257.4px;width:127.5px;height:22.8px;background:#4c6287;"></div>
<div style="left:859px;top:257.4px;width:16.5px;height:22.8px;background:#4f4d50;border-right:1px solid #434144;"></div>
<svg style="left:862.5px;top:266px" width="9" height="6" viewBox="0 0 9 6"><path d="M0.4 3 Q4.5 -1.4 8.6 3 Q4.5 7.4 0.4 3 Z" fill="none" stroke="#d4d2d5" stroke-width="0.9"/><circle cx="4.5" cy="3" r="1.4" fill="#d4d2d5"/></svg>
<div style="left:877.5px;top:258.4px;width:19.5px;height:20.6px;background:#ffffff;border:1px solid #e8e8e8;outline:1px solid #77757a;outline-offset:-2px;background:repeating-conic-gradient(#e6dfd6 0% 25%,#ffffff 0% 50%) 0 0/5px 5px;"></div>
<div style="left:877.5px;top:277px;width:2px;height:2px;background:#fff;"></div>
<div style="left:895px;top:277px;width:2px;height:2px;background:#fff;"></div>
<div style="top:263.80px;font-size:7.4px;line-height:10.4px;color:#f4f2f5;white-space:nowrap;left:902px;letter-spacing:-0.4px;">黑色背景</div>
<div style="top:263.60px;font-size:7px;line-height:10px;color:#e6e4e7;white-space:nowrap;left:972.5px;font-style:italic;font-family:'Liberation Serif',serif;">fx</div>
<div style="left:859px;top:280.2px;width:127.5px;height:1px;background:#3d3b3e;"></div>
<div style="left:859px;top:281.2px;width:127.5px;height:21.6px;background:#535154;"></div>
<div style="left:875px;top:281.2px;width:1px;height:21.6px;background:#434144;"></div>
<svg style="left:862.5px;top:288.4px" width="9" height="6" viewBox="0 0 9 6"><path d="M0.4 3 Q4.5 -1.4 8.6 3 Q4.5 7.4 0.4 3 Z" fill="none" stroke="#d4d2d5" stroke-width="0.9"/><circle cx="4.5" cy="3" r="1.4" fill="#d4d2d5"/></svg>
<div style="left:878px;top:282.2px;width:18.5px;height:18.4px;background:#ffffff;border:1px solid #cfcdd0;"></div>
<div style="top:286.40px;font-size:7.4px;line-height:10.4px;color:#eeecef;white-space:nowrap;left:902px;font-style:italic;letter-spacing:-0.4px;">背景</div>
<svg style="left:971.5px;top:287.4px" width="7" height="8" viewBox="0 0 7 8"><rect x="0.8" y="3.6" width="5.4" height="3.8" fill="#bdbbbe"/><path d="M2 3.6 V2.6 A1.5 1.5 0 0 1 5 2.6 V3.6" fill="none" stroke="#bdbbbe" stroke-width="0.9"/></svg>
<div style="left:859px;top:302.8px;width:127.5px;height:1px;background:#3d3b3e;"></div>
<div style="left:986.5px;top:257.4px;width:8.5px;height:162px;background:#4c4a4d;border-left:1px solid #3d3b3e;"></div>
</div></body></html>
